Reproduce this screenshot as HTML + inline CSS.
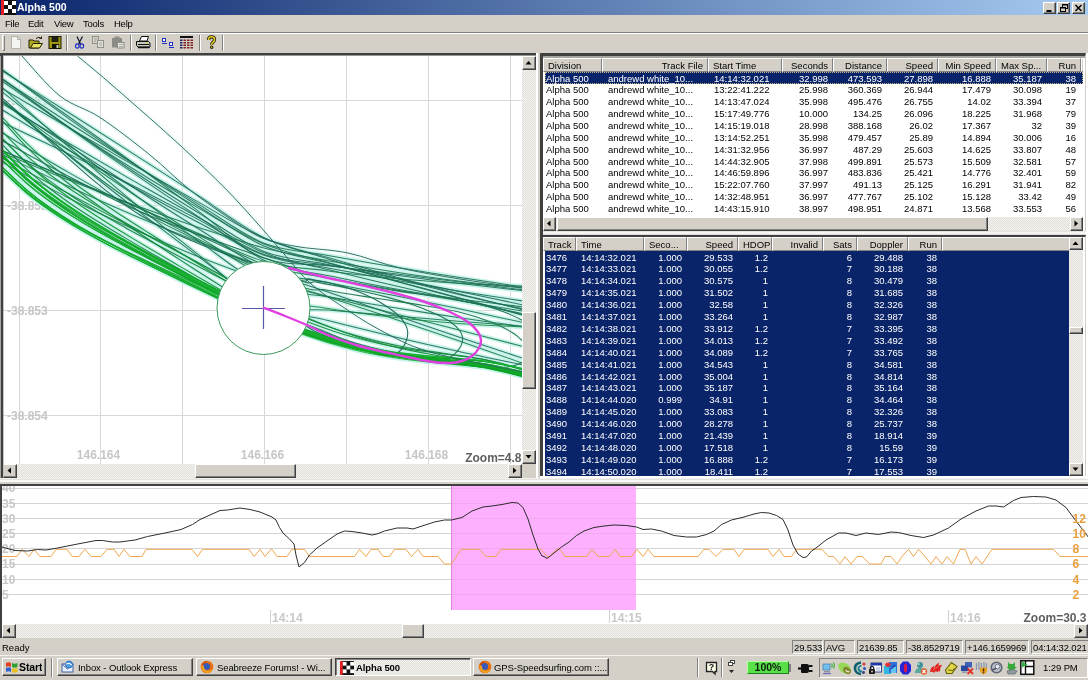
<!DOCTYPE html><html><head><meta charset="utf-8"><title>Alpha 500</title><style>
*{box-sizing:border-box;margin:0;padding:0}
html,body{width:1088px;height:680px;overflow:hidden;background:#d4d0c8;font-family:"Liberation Sans",sans-serif;font-size:10px;color:#000}
.abs{position:absolute}
#title{left:0;top:0;width:1088px;height:15px;background:linear-gradient(90deg,#0a246a 0%,#a6caf0 100%)}
#title .t{left:17px;top:1px;color:#fff;font-weight:bold;font-size:10.5px;line-height:13px;letter-spacing:0px}
.menu{top:16px;height:16px;line-height:16px;font-size:9.5px;letter-spacing:-.25px;color:#000}
.chk{background-color:#ebe9e5;background-image:conic-gradient(#f4f3f0 25%,#e1dfda 0 50%,#f4f3f0 0 75%,#e1dfda 0);background-size:2px 2px}
.btn{background:#d4d0c8;border:1px solid;border-color:#fff #404040 #404040 #fff;box-shadow:inset -1px -1px 0 #808080}
.sunk{border:1px solid;border-color:#808080 #fff #fff #808080}
.hd{position:absolute;top:0;height:14px;background:#d4d0c8;border:1px solid;border-color:#fff #808080 #808080 #fff;font-size:9.5px;line-height:13px;padding:0 4px;white-space:nowrap;overflow:hidden}
.r{text-align:right}
.row{position:absolute;left:0;height:12px;line-height:14px;font-size:9.5px;white-space:nowrap}
.row span{position:absolute;top:0;height:13px;overflow:hidden}
.sel{background:#0a246a;color:#fff}
.lbl{font-weight:bold;font-size:11px;color:#c4c4c4;line-height:11px;white-space:nowrap}
.sb{font-size:9.5px;letter-spacing:-.15px;line-height:13px;white-space:nowrap;overflow:hidden;border:1px solid;border-color:#808080 #fff #fff #808080;padding-left:1px;height:14px;top:640px}
.tb{top:659px;height:18px;font-size:9.5px;letter-spacing:-.1px;line-height:17px;white-space:nowrap;overflow:hidden}
#root{position:absolute;left:0;top:0;width:1088px;height:680px;overflow:hidden;will-change:transform}</style></head><body><div id="root">
<div id="title" class="abs">
<svg class="abs" style="left:1px;top:0" width="15" height="15" viewBox="0 0 15 15"><rect width="15" height="15" fill="#101010"/><rect x="0" y="0" width="3" height="15" fill="#e02020"/><rect x="3" y="1" width="4" height="4" fill="#fff"/><rect x="11" y="1" width="4" height="4" fill="#fff"/><rect x="7" y="5" width="4" height="4" fill="#fff"/><rect x="3" y="9" width="4" height="4" fill="#fff"/><rect x="11" y="9" width="4" height="4" fill="#fff"/></svg>
<div class="abs t">Alpha 500</div>
<div class="abs btn" style="left:1043px;top:2px;width:13px;height:12px"></div>
<div class="abs btn" style="left:1057px;top:2px;width:13px;height:12px"></div>
<div class="abs btn" style="left:1072px;top:2px;width:13px;height:12px"></div>
<svg class="abs" style="left:1043px;top:2px" width="45" height="12" viewBox="0 0 45 12"><rect x="3.500" y="8" width="5" height="2" fill="#000"/><rect x="19.500" y="2.500" width="5" height="4" fill="none" stroke="#000"/><rect x="19" y="2" width="6" height="1.500" fill="#000"/><rect x="17.500" y="5.500" width="5" height="4" fill="#d4d0c8" stroke="#000"/><rect x="17" y="5" width="6" height="1.500" fill="#000"/><path d="M32.500 3 L38.500 9 M38.500 3 L32.500 9" stroke="#000" stroke-width="1.500"/></svg>
</div>
<div class="abs menu" style="left:5px">File</div>
<div class="abs menu" style="left:28px">Edit</div>
<div class="abs menu" style="left:54px">View</div>
<div class="abs menu" style="left:83px">Tools</div>
<div class="abs menu" style="left:114px">Help</div>
<div class="abs" style="left:0;top:32px;width:1088px;height:1px;background:#808080"></div>
<div class="abs" style="left:0;top:33px;width:1088px;height:1px;background:#fff"></div>
<div class="abs" style="left:2px;top:35px;width:3px;height:16px;border:1px solid;border-color:#fff #808080 #808080 #fff"></div>
<div class="abs" style="left:66px;top:35px;width:2px;height:16px;border-left:1px solid #808080;border-right:1px solid #fff"></div>
<div class="abs" style="left:130px;top:35px;width:2px;height:16px;border-left:1px solid #808080;border-right:1px solid #fff"></div>
<div class="abs" style="left:155px;top:35px;width:2px;height:16px;border-left:1px solid #808080;border-right:1px solid #fff"></div>
<div class="abs" style="left:199px;top:35px;width:2px;height:16px;border-left:1px solid #808080;border-right:1px solid #fff"></div>
<div class="abs" style="left:222px;top:35px;width:2px;height:16px;border-left:1px solid #808080;border-right:1px solid #fff"></div>
<svg class="abs" style="left:0;top:34px" width="230" height="19" viewBox="0 34 230 19">
<path d="M11.5 36.5 H17.5 L20.5 39.5 V48.5 H11.5 Z" fill="#f4f4f0" stroke="#b4b2aa" stroke-width="1"/><path d="M17.5 36.5 V39.5 H20.5" fill="none" stroke="#b4b2aa"/>
<path d="M29 40 H33 L34 41 H39 V48 H29 Z" fill="#b0a820" stroke="#202000" stroke-width="1"/><path d="M30.5 48 L33 43.5 H42.5 L39.5 48 Z" fill="#e8e060" stroke="#202000" stroke-width="1"/><path d="M36 38.5 Q39 36 41.5 38.5 M41.5 38.5 V36.5 M41.5 38.5 H39.5" fill="none" stroke="#202000" stroke-width="1"/>
<rect x="49" y="36.5" width="12" height="12" fill="#a09810" stroke="#181800" stroke-width="1"/><rect x="51.5" y="37" width="7" height="5" fill="#202010"/><rect x="52" y="44" width="7" height="4.5" fill="#101000"/><rect x="56.5" y="45" width="2" height="3" fill="#d0d0c0"/>
<path d="M77 36.5 L80.5 44 M82.5 36.5 L78.5 44" stroke="#101020" stroke-width="1.2" fill="none"/><ellipse cx="77.3" cy="46" rx="1.8" ry="2.2" fill="none" stroke="#2030c0" stroke-width="1.2"/><ellipse cx="81.8" cy="46" rx="1.8" ry="2.2" fill="none" stroke="#2030c0" stroke-width="1.2"/>
<rect x="92.5" y="36.5" width="6" height="7" fill="#d4d0c8" stroke="#909088"/><rect x="97.5" y="40.5" width="6" height="7" fill="#e4e2dc" stroke="#909088"/><path d="M94 39 H97 M94 41 H96 M99 43 H102 M99 45 H102" stroke="#a0a098" stroke-width="1"/>
<rect x="112" y="38" width="10" height="9.5" fill="#8c8c86"/><rect x="114.5" y="36.5" width="5" height="2.5" fill="#8c8c86"/><rect x="117.500" y="42.5" width="6.500" height="5.500" fill="#e8e6e0" stroke="#8c8c86"/><path d="M119 44.5 H123 M119 46.5 H123" stroke="#a0a098" stroke-width=".8"/>
<path d="M139.500 41 L141.500 36.500 H148.500 L147 41 Z" fill="#fff" stroke="#101010" stroke-width="1"/><path d="M136.500 41.500 H148.500 L150 43 V47 H138 L136.500 45.500 Z" fill="#c8c8c0" stroke="#101010" stroke-width="1"/><path d="M138 44.500 H149" stroke="#101010" stroke-width="1"/><path d="M138 47.500 H149.500" stroke="#101010" stroke-width="1.5"/><rect x="146" y="42.500" width="2" height="1" fill="#e0e000"/>
<rect x="162.500" y="38.500" width="3" height="3" fill="#fff" stroke="#2030c0"/><path d="M162 43.500 H167" stroke="#2030c0"/><rect x="169.500" y="42.500" width="3" height="3" fill="#fff" stroke="#2030c0"/><path d="M169 47.500 H174" stroke="#2030c0"/>
<rect x="180" y="36" width="13" height="2" fill="#101010"/>
<rect x="180" y="39.5" width="2.500" height="1.500" fill="#202060"/>
<rect x="183.5" y="39.5" width="2.500" height="1.500" fill="#802020"/>
<rect x="187" y="39.5" width="2.500" height="1.500" fill="#802020"/>
<rect x="190.5" y="39.5" width="2.500" height="1.500" fill="#802020"/>
<rect x="180" y="42" width="2.500" height="1.500" fill="#202060"/>
<rect x="183.5" y="42" width="2.500" height="1.500" fill="#802020"/>
<rect x="187" y="42" width="2.500" height="1.500" fill="#802020"/>
<rect x="190.5" y="42" width="2.500" height="1.500" fill="#802020"/>
<rect x="180" y="44.5" width="2.500" height="1.500" fill="#202060"/>
<rect x="183.5" y="44.5" width="2.500" height="1.500" fill="#802020"/>
<rect x="187" y="44.5" width="2.500" height="1.500" fill="#802020"/>
<rect x="190.5" y="44.5" width="2.500" height="1.500" fill="#802020"/>
<rect x="180" y="47" width="2.500" height="1.500" fill="#202060"/>
<rect x="183.5" y="47" width="2.500" height="1.500" fill="#802020"/>
<rect x="187" y="47" width="2.500" height="1.500" fill="#802020"/>
<rect x="190.5" y="47" width="2.500" height="1.500" fill="#802020"/>
<path d="M208.500 40 Q208.500 36.800 211.500 36.800 Q214.500 36.800 214.500 39.600 Q214.500 41.400 212.800 42.400 Q211.700 43.100 211.700 44.800" fill="none" stroke="#201800" stroke-width="3.200"/><path d="M208.500 40 Q208.500 36.800 211.500 36.800 Q214.500 36.800 214.500 39.600 Q214.500 41.400 212.800 42.400 Q211.700 43.100 211.700 44.800" fill="none" stroke="#e0d020" stroke-width="1.600"/><circle cx="211.700" cy="47.300" r="1.700" fill="#201800"/><circle cx="211.700" cy="47.300" r=".8" fill="#e0d020"/>
</svg>
<div class="abs" style="left:0;top:53px;width:536px;height:425px;background:#fff;border-top:3px solid #404040;border-left:3px solid #404040"></div><div class="abs" style="left:0;top:56px;width:1px;height:422px;background:#a8a49e"></div><div class="abs" style="left:536px;top:53px;width:2px;height:426px;background:#fff"></div><div class="abs" style="left:0;top:478px;width:1088px;height:4px;background:linear-gradient(#f2f1ee 0 1px,#e4e2dd 1px 2px,#f8f8f6 2px 4px)"></div>
<svg class="abs" style="left:3px;top:56px" width="519" height="408" viewBox="3 56 519 408">
<path d="M19.5 56V464M100.5 56V464M182.5 56V464M264.5 56V464M346.5 56V464M428.5 56V464M510.5 56V464M3 100.5H522M3 205.5H522M3 310.5H522M3 415.5H522" stroke="#d8d8d8" stroke-width="1" fill="none"/>
<text x="7" y="104.8" font-family="Liberation Sans,sans-serif" font-weight="bold" font-size="12" fill="#c6c6c6">-38.851</text>
<text x="7" y="209.8" font-family="Liberation Sans,sans-serif" font-weight="bold" font-size="12" fill="#c6c6c6">-38.852</text>
<text x="7" y="314.8" font-family="Liberation Sans,sans-serif" font-weight="bold" font-size="12" fill="#c6c6c6">-38.853</text>
<text x="7" y="419.8" font-family="Liberation Sans,sans-serif" font-weight="bold" font-size="12" fill="#c6c6c6">-38.854</text>
<text x="98.5" y="459" text-anchor="middle" font-family="Liberation Sans,sans-serif" font-weight="bold" font-size="12" fill="#c6c6c6">146.164</text>
<text x="262.5" y="459" text-anchor="middle" font-family="Liberation Sans,sans-serif" font-weight="bold" font-size="12" fill="#c6c6c6">146.166</text>
<text x="426.5" y="459" text-anchor="middle" font-family="Liberation Sans,sans-serif" font-weight="bold" font-size="12" fill="#c6c6c6">146.168</text>
<path d="M3.0 104.1C13.8 110.5 46.3 130.1 68.0 142.8C89.7 155.6 111.3 168.2 133.0 180.6C154.7 192.9 176.2 205.2 198.0 217.2C219.8 229.2 242.3 244.1 264.0 252.8C285.7 261.5 306.5 264.1 328.0 269.6C349.5 275.0 371.3 280.2 393.0 285.3C414.7 290.4 436.3 295.3 458.0 300.0C479.7 304.8 512.2 311.4 523.0 313.7" stroke="#c4f2ea" stroke-width="4.5" fill="none" opacity="0.9"/>
<path d="M3.0 79.2C13.8 87.1 46.3 111.2 68.0 126.5C89.7 141.8 111.3 156.6 133.0 171.0C154.7 185.3 176.2 199.2 198.0 212.6C219.8 226.0 242.3 242.7 264.0 251.4C285.7 260.0 306.5 260.0 328.0 264.4C349.5 268.8 371.3 273.2 393.0 277.7C414.7 282.2 436.3 286.7 458.0 291.2C479.7 295.7 512.2 302.6 523.0 304.9" stroke="#c4f2ea" stroke-width="4.5" fill="none" opacity="0.9"/>
<path d="M3.0 70.4C13.8 78.0 46.3 100.6 68.0 116.0C89.7 131.4 111.3 147.0 133.0 162.8C154.7 178.6 176.2 194.7 198.0 210.9C219.8 227.2 242.3 249.5 264.0 260.3C285.7 271.1 306.5 270.9 328.0 275.6C349.5 280.3 371.3 284.6 393.0 288.4C414.7 292.3 436.3 295.8 458.0 298.8C479.7 301.9 512.2 305.5 523.0 306.8" stroke="#c4f2ea" stroke-width="4.5" fill="none" opacity="0.9"/>
<path d="M3.0 122.8C13.8 127.9 46.3 143.1 68.0 153.6C89.7 164.1 111.3 174.8 133.0 185.8C154.7 196.8 176.2 208.0 198.0 219.4C219.8 230.9 242.3 246.8 264.0 254.5C285.7 262.1 306.5 261.8 328.0 265.2C349.5 268.5 371.3 271.7 393.0 274.8C414.7 277.8 436.3 280.6 458.0 283.3C479.7 285.9 512.2 289.5 523.0 290.7" stroke="#c4f2ea" stroke-width="4.5" fill="none" opacity="0.9"/>
<path d="M3.0 79.7C13.8 86.8 46.3 108.2 68.0 122.2C89.7 136.1 111.3 149.9 133.0 163.6C154.7 177.2 176.2 190.7 198.0 203.9C219.8 217.2 242.3 234.7 264.0 243.3C285.7 251.8 306.5 251.5 328.0 255.4C349.5 259.3 371.3 263.1 393.0 266.7C414.7 270.4 436.3 273.9 458.0 277.2C479.7 280.6 512.2 285.3 523.0 286.9" stroke="#c4f2ea" stroke-width="4.5" fill="none" opacity="0.9"/>
<path d="M3.0 110.3C13.8 116.9 46.3 136.9 68.0 149.7C89.7 162.5 111.3 175.0 133.0 187.0C154.7 199.1 176.2 210.8 198.0 222.2C219.8 233.6 242.3 247.6 264.0 255.2C285.7 262.8 306.5 263.9 328.0 268.0C349.5 272.1 371.3 276.0 393.0 279.8C414.7 283.7 436.3 287.3 458.0 290.9C479.7 294.4 512.2 299.3 523.0 301.0" stroke="#c4f2ea" stroke-width="4.5" fill="none" opacity="0.9"/>
<path d="M3.0 154.8C13.8 160.0 46.3 176.1 68.0 186.1C89.7 196.2 111.3 205.9 133.0 215.1C154.7 224.4 176.2 233.2 198.0 241.7C219.8 250.1 242.3 259.8 264.0 265.9C285.7 271.9 306.5 273.9 328.0 277.9C349.5 281.8 371.3 285.7 393.0 289.4C414.7 293.2 436.3 296.9 458.0 300.5C479.7 304.2 512.2 309.4 523.0 311.2" stroke="#c4f2ea" stroke-width="4.5" fill="none" opacity="0.9"/>
<path d="M3.0 88.9C13.8 95.3 46.3 114.6 68.0 127.2C89.7 139.9 111.3 152.5 133.0 164.9C154.7 177.3 176.2 189.7 198.0 201.9C219.8 214.1 242.3 228.6 264.0 238.1C285.7 247.6 306.5 252.3 328.0 258.9C349.5 265.5 371.3 271.7 393.0 277.6C414.7 283.5 436.3 289.1 458.0 294.3C479.7 299.6 512.2 306.5 523.0 309.0" stroke="#c4f2ea" stroke-width="4.5" fill="none" opacity="0.9"/>
<path d="M3.0 151.1C13.8 155.6 46.3 169.1 68.0 178.2C89.7 187.2 111.3 196.4 133.0 205.6C154.7 214.8 176.2 224.0 198.0 233.3C219.8 242.6 242.3 255.2 264.0 261.4C285.7 267.7 306.5 268.1 328.0 270.9C349.5 273.7 371.3 276.1 393.0 278.2C414.7 280.2 436.3 281.9 458.0 283.2C479.7 284.5 512.2 285.5 523.0 286.0" stroke="#c4f2ea" stroke-width="4.5" fill="none" opacity="0.9"/>
<path d="M3.0 153.2C13.8 157.6 46.3 171.3 68.0 179.8C89.7 188.4 111.3 196.6 133.0 204.5C154.7 212.4 176.2 219.9 198.0 227.2C219.8 234.4 242.3 242.3 264.0 247.9C285.7 253.5 306.5 256.8 328.0 260.7C349.5 264.7 371.3 268.4 393.0 271.7C414.7 275.1 436.3 278.1 458.0 280.9C479.7 283.6 512.2 287.0 523.0 288.2" stroke="#c4f2ea" stroke-width="4.5" fill="none" opacity="0.9"/>
<path d="M3.0 70.1C13.8 78.1 46.3 102.5 68.0 118.1C89.7 133.6 111.3 148.7 133.0 163.4C154.7 178.0 176.2 192.2 198.0 206.0C219.8 219.8 242.3 236.5 264.0 246.0C285.7 255.5 306.5 257.3 328.0 263.0C349.5 268.7 371.3 274.4 393.0 280.2C414.7 285.9 436.3 291.7 458.0 297.5C479.7 303.3 512.2 312.0 523.0 314.9" stroke="#c4f2ea" stroke-width="4.5" fill="none" opacity="0.9"/>
<path d="M3.0 71.4C13.8 78.2 46.3 98.5 68.0 112.2C89.7 125.9 111.3 139.7 133.0 153.6C154.7 167.4 176.2 181.4 198.0 195.4C219.8 209.5 242.3 227.4 264.0 237.8C285.7 248.2 306.5 251.2 328.0 257.6C349.5 264.0 371.3 270.2 393.0 276.2C414.7 282.2 436.3 288.0 458.0 293.6C479.7 299.3 512.2 307.2 523.0 309.9" stroke="#c4f2ea" stroke-width="4.5" fill="none" opacity="0.9"/>
<path d="M3.0 79.7C13.8 87.7 46.3 111.8 68.0 127.4C89.7 142.9 111.3 158.1 133.0 172.9C154.7 187.8 176.2 202.3 198.0 216.5C219.8 230.6 242.3 249.7 264.0 258.0C285.7 266.2 306.5 263.1 328.0 265.7C349.5 268.3 371.3 271.0 393.0 273.6C414.7 276.3 436.3 279.0 458.0 281.7C479.7 284.4 512.2 288.6 523.0 289.9" stroke="#c4f2ea" stroke-width="4.5" fill="none" opacity="0.9"/>
<path d="M3.0 81.8C13.8 89.3 46.3 112.3 68.0 126.7C89.7 141.2 111.3 155.3 133.0 168.8C154.7 182.3 176.2 195.3 198.0 207.9C219.8 220.4 242.3 235.0 264.0 244.1C285.7 253.2 306.5 256.4 328.0 262.5C349.5 268.5 371.3 274.5 393.0 280.4C414.7 286.4 436.3 292.2 458.0 298.0C479.7 303.8 512.2 312.3 523.0 315.1" stroke="#c4f2ea" stroke-width="4.5" fill="none" opacity="0.9"/>
<path d="M3.0 102.1C13.8 109.9 46.3 134.0 68.0 149.3C89.7 164.6 111.3 179.5 133.0 194.0C154.7 208.4 176.2 222.5 198.0 236.1C219.8 249.7 242.3 265.6 264.0 275.7C285.7 285.8 306.5 289.7 328.0 296.9C349.5 304.0 371.3 311.2 393.0 318.5C414.7 325.8 436.3 333.2 458.0 340.6C479.7 348.1 512.2 359.5 523.0 363.3" stroke="#c4f2ea" stroke-width="4.5" fill="none" opacity="0.9"/>
<path d="M3.0 102.3C13.8 109.4 46.3 131.0 68.0 145.1C89.7 159.3 111.3 173.3 133.0 187.2C154.7 201.1 176.2 214.9 198.0 228.5C219.8 242.1 242.3 258.3 264.0 268.9C285.7 279.5 306.5 284.4 328.0 292.0C349.5 299.6 371.3 307.1 393.0 314.6C414.7 322.1 436.3 329.4 458.0 336.7C479.7 344.0 512.2 354.8 523.0 358.4" stroke="#c4f2ea" stroke-width="4.5" fill="none" opacity="0.9"/>
<path d="M3.0 92.3C13.8 100.9 46.3 127.1 68.0 144.0C89.7 160.8 111.3 177.3 133.0 193.3C154.7 209.4 176.2 225.1 198.0 240.4C219.8 255.7 242.3 275.7 264.0 285.1C285.7 294.5 306.5 293.0 328.0 296.8C349.5 300.5 371.3 304.1 393.0 307.6C414.7 311.0 436.3 314.3 458.0 317.5C479.7 320.7 512.2 325.1 523.0 326.6" stroke="#c4f2ea" stroke-width="4.5" fill="none" opacity="0.9"/>
<path d="M3.0 162.7C13.8 168.5 46.3 186.7 68.0 197.7C89.7 208.8 111.3 219.2 133.0 229.0C154.7 238.8 176.2 247.9 198.0 256.5C219.8 265.0 242.3 273.5 264.0 280.2C285.7 286.9 306.5 291.1 328.0 296.6C349.5 302.1 371.3 307.6 393.0 313.2C414.7 318.7 436.3 324.2 458.0 329.8C479.7 335.3 512.2 343.7 523.0 346.5" stroke="#c4f2ea" stroke-width="4.5" fill="none" opacity="0.9"/>
<path d="M3.0 158.6C13.8 164.4 46.3 181.7 68.0 193.2C89.7 204.8 111.3 216.3 133.0 227.8C154.7 239.3 176.2 250.9 198.0 262.4C219.8 273.9 242.3 289.2 264.0 296.9C285.7 304.6 306.5 305.1 328.0 308.5C349.5 311.9 371.3 314.8 393.0 317.3C414.7 319.8 436.3 321.9 458.0 323.5C479.7 325.1 512.2 326.4 523.0 327.0" stroke="#c4f2ea" stroke-width="4.5" fill="none" opacity="0.9"/>
<path d="M3.0 100.9C13.8 109.9 46.3 137.4 68.0 155.0C89.7 172.7 111.3 190.0 133.0 206.9C154.7 223.7 176.2 240.2 198.0 256.3C219.8 272.4 242.3 292.8 264.0 303.5C285.7 314.2 306.5 315.0 328.0 320.5C349.5 326.0 371.3 331.3 393.0 336.4C414.7 341.6 436.3 346.5 458.0 351.2C479.7 356.0 512.2 362.6 523.0 364.9" stroke="#c4f2ea" stroke-width="4.5" fill="none" opacity="0.9"/>
<path d="M3.0 88.1C13.8 97.9 46.3 127.5 68.0 146.4C89.7 165.4 111.3 183.9 133.0 201.9C154.7 219.9 176.2 237.4 198.0 254.4C219.8 271.5 242.3 294.9 264.0 304.1C285.7 313.4 306.5 308.2 328.0 310.1C349.5 312.0 371.3 313.9 393.0 315.8C414.7 317.6 436.3 319.4 458.0 321.2C479.7 322.9 512.2 325.5 523.0 326.3" stroke="#c4f2ea" stroke-width="4.5" fill="none" opacity="0.9"/>
<path d="M3.0 133.3C13.8 139.8 46.3 159.7 68.0 172.1C89.7 184.5 111.3 196.5 133.0 207.9C154.7 219.4 176.2 230.3 198.0 240.8C219.8 251.2 242.3 263.7 264.0 270.7C285.7 277.7 306.5 278.5 328.0 282.7C349.5 286.8 371.3 291.0 393.0 295.3C414.7 299.6 436.3 304.0 458.0 308.6C479.7 313.1 512.2 320.2 523.0 322.5" stroke="#c4f2ea" stroke-width="4.5" fill="none" opacity="0.9"/>
<path d="M3.0 139.5C6.8 143.3 18.2 154.9 26.0 161.9C33.8 168.8 41.8 175.1 50.0 181.1C58.2 187.2 66.7 192.8 75.0 198.2C83.3 203.5 91.7 208.4 100.0 213.3C108.3 218.2 116.7 222.8 125.0 227.4C133.3 232.0 140.5 235.8 150.0 240.9C159.5 246.0 171.2 252.2 182.0 257.9C192.8 263.6 205.3 270.2 215.0 275.2C224.7 280.2 231.8 283.8 240.0 287.9C248.2 292.0 256.2 295.9 264.0 299.6C271.8 303.3 279.3 306.8 287.0 310.1C294.7 313.5 302.3 316.7 310.0 319.7C317.7 322.7 325.3 325.6 333.0 328.2C340.7 330.9 348.2 333.3 356.0 335.6C363.8 337.8 372.2 340.0 380.0 341.9C387.8 343.7 395.3 345.3 403.0 346.7C410.7 348.2 418.2 349.4 426.0 350.7C433.8 351.9 440.0 352.6 450.0 354.2C460.0 355.7 473.8 357.3 486.0 360.0C498.2 362.6 516.8 368.4 523.0 370.0" stroke="#c4f2ea" stroke-width="4.5" fill="none" opacity="0.95"/>
<path d="M3.0 121.3C6.8 125.5 18.2 138.5 26.0 146.4C33.8 154.2 41.8 161.4 50.0 168.5C58.2 175.5 66.7 182.1 75.0 188.5C83.3 194.9 91.7 200.8 100.0 206.6C108.3 212.5 116.7 218.1 125.0 223.7C133.3 229.3 140.5 234.0 150.0 240.2C159.5 246.5 171.2 254.1 182.0 261.1C192.8 268.1 205.3 276.1 215.0 282.3C224.7 288.4 231.8 292.9 240.0 298.0C248.2 303.0 256.2 308.5 264.0 312.6C271.8 316.7 279.3 319.3 287.0 322.5C294.7 325.6 302.3 328.6 310.0 331.4C317.7 334.3 325.3 336.9 333.0 339.3C340.7 341.8 348.2 344.0 356.0 346.0C363.8 348.1 372.2 350.1 380.0 351.7C387.8 353.4 395.3 354.7 403.0 355.9C410.7 357.2 418.2 358.2 426.0 359.2C433.8 360.3 440.0 360.8 450.0 362.1C460.0 363.4 473.8 364.6 486.0 367.0C498.2 369.3 516.8 374.5 523.0 376.0" stroke="#c4f2ea" stroke-width="4.5" fill="none" opacity="0.95"/>
<path d="M3.0 145.3C6.8 149.2 18.2 161.3 26.0 168.6C33.8 175.8 41.8 182.3 50.0 188.7C58.2 195.1 66.7 201.0 75.0 206.7C83.3 212.4 91.7 217.6 100.0 222.8C108.3 228.0 116.7 232.9 125.0 237.9C133.3 242.8 140.5 246.9 150.0 252.4C159.5 257.8 171.2 264.5 182.0 270.6C192.8 276.7 205.3 283.7 215.0 289.1C224.7 294.5 231.8 298.4 240.0 302.8C248.2 307.2 256.2 311.8 264.0 315.5C271.8 319.1 279.3 321.9 287.0 324.9C294.7 327.9 302.3 330.8 310.0 333.5C317.7 336.2 325.3 338.7 333.0 341.0C340.7 343.3 348.2 345.4 356.0 347.3C363.8 349.3 372.2 351.1 380.0 352.6C387.8 354.1 395.3 355.3 403.0 356.4C410.7 357.5 418.2 358.4 426.0 359.3C433.8 360.2 440.0 360.7 450.0 361.8C460.0 362.9 473.8 363.9 486.0 366.0C498.2 368.1 516.8 373.0 523.0 374.4" stroke="#c4f2ea" stroke-width="4.5" fill="none" opacity="0.95"/>
<path d="M3.0 138.9C6.8 142.8 18.2 155.2 26.0 162.5C33.8 169.9 41.8 176.6 50.0 183.2C58.2 189.7 66.7 195.8 75.0 201.7C83.3 207.5 91.7 212.9 100.0 218.2C108.3 223.6 116.7 228.7 125.0 233.8C133.3 238.8 140.5 243.1 150.0 248.7C159.5 254.4 171.2 261.3 182.0 267.6C192.8 273.9 205.3 281.2 215.0 286.8C224.7 292.3 231.8 296.4 240.0 300.9C248.2 305.5 256.2 310.3 264.0 314.0C271.8 317.8 279.3 320.5 287.0 323.5C294.7 326.5 302.3 329.3 310.0 332.0C317.7 334.7 325.3 337.2 333.0 339.5C340.7 341.8 348.2 343.8 356.0 345.8C363.8 347.7 372.2 349.5 380.0 351.0C387.8 352.5 395.3 353.7 403.0 354.8C410.7 355.9 418.2 356.7 426.0 357.6C433.8 358.5 440.0 359.0 450.0 360.1C460.0 361.2 473.8 362.1 486.0 364.2C498.2 366.3 516.8 371.2 523.0 372.6" stroke="#c4f2ea" stroke-width="4.5" fill="none" opacity="0.95"/>
<path d="M3.0 118.0C6.8 122.1 18.2 134.9 26.0 142.6C33.8 150.3 41.8 157.4 50.0 164.2C58.2 171.0 66.7 177.5 75.0 183.7C83.3 189.9 91.7 195.6 100.0 201.3C108.3 206.9 116.7 212.3 125.0 217.8C133.3 223.2 140.5 227.7 150.0 233.7C159.5 239.7 171.2 247.1 182.0 253.8C192.8 260.6 205.3 268.4 215.0 274.3C224.7 280.2 231.8 284.6 240.0 289.5C248.2 294.3 256.2 299.5 264.0 303.5C271.8 307.5 279.3 310.4 287.0 313.6C294.7 316.8 302.3 319.9 310.0 322.8C317.7 325.7 325.3 328.4 333.0 330.9C340.7 333.4 348.2 335.7 356.0 337.8C363.8 339.9 372.2 342.0 380.0 343.7C387.8 345.4 395.3 346.8 403.0 348.1C410.7 349.5 418.2 350.5 426.0 351.6C433.8 352.7 440.0 353.4 450.0 354.7C460.0 356.1 473.8 357.5 486.0 359.9C498.2 362.3 516.8 367.7 523.0 369.3" stroke="#c4f2ea" stroke-width="4.5" fill="none" opacity="0.95"/>
<path d="M3.0 160.9C6.8 164.5 18.2 176.0 26.0 182.8C33.8 189.6 41.8 195.7 50.0 201.6C58.2 207.5 66.7 212.9 75.0 218.1C83.3 223.3 91.7 228.1 100.0 232.8C108.3 237.5 116.7 241.9 125.0 246.4C133.3 250.8 140.5 254.5 150.0 259.4C159.5 264.4 171.2 270.3 182.0 275.8C192.8 281.3 205.3 287.6 215.0 292.5C224.7 297.3 231.8 300.8 240.0 304.7C248.2 308.6 256.2 312.5 264.0 316.0C271.8 319.4 279.3 322.5 287.0 325.5C294.7 328.6 302.3 331.5 310.0 334.2C317.7 336.9 325.3 339.5 333.0 341.8C340.7 344.2 348.2 346.3 356.0 348.2C363.8 350.2 372.2 352.0 380.0 353.6C387.8 355.1 395.3 356.3 403.0 357.5C410.7 358.7 418.2 359.6 426.0 360.5C433.8 361.4 440.0 361.9 450.0 363.1C460.0 364.2 473.8 365.3 486.0 367.4C498.2 369.6 516.8 374.6 523.0 376.0" stroke="#c4f2ea" stroke-width="4.5" fill="none" opacity="0.95"/>
<path d="M3.0 132.3C6.8 136.1 18.2 148.0 26.0 155.1C33.8 162.2 41.8 168.6 50.0 174.8C58.2 181.0 66.7 186.8 75.0 192.3C83.3 197.8 91.7 202.9 100.0 207.9C108.3 213.0 116.7 217.7 125.0 222.5C133.3 227.2 140.5 231.2 150.0 236.5C159.5 241.8 171.2 248.2 182.0 254.1C192.8 260.0 205.3 266.8 215.0 272.0C224.7 277.2 231.8 281.0 240.0 285.2C248.2 289.5 256.2 293.5 264.0 297.4C271.8 301.3 279.3 305.0 287.0 308.6C294.7 312.2 302.3 315.7 310.0 319.0C317.7 322.2 325.3 325.3 333.0 328.2C340.7 331.1 348.2 333.7 356.0 336.2C363.8 338.8 372.2 341.2 380.0 343.3C387.8 345.4 395.3 347.2 403.0 348.9C410.7 350.6 418.2 352.0 426.0 353.5C433.8 355.0 440.0 355.9 450.0 357.8C460.0 359.7 473.8 361.7 486.0 364.8C498.2 367.8 516.8 374.1 523.0 376.0" stroke="#c4f2ea" stroke-width="4.5" fill="none" opacity="0.95"/>
<path d="M3.0 98.7C25.8 118.1 92.3 185.4 140.0 215.0C187.7 244.5 261.0 265.3 289.0 275.9C317.0 286.6 301.3 277.8 308.2 278.9C315.1 280.1 322.8 281.2 330.4 283.0C338.0 284.8 346.8 287.4 353.9 289.9C361.0 292.5 367.3 295.3 373.1 298.2C378.8 301.2 384.1 304.6 388.5 307.7C393.0 310.7 396.8 313.7 399.7 316.6C402.5 319.6 404.5 322.7 405.8 325.3C407.2 327.9 407.6 329.7 407.7 332.2C407.8 334.7 407.4 337.6 406.5 340.3C405.5 343.0 403.9 346.3 402.1 348.6C400.4 350.8 398.2 352.5 396.0 353.7C393.7 354.9 391.8 355.7 388.5 355.7C385.2 355.7 381.0 355.2 376.2 353.9C371.3 352.6 364.6 349.8 359.5 348.0C354.3 346.2 350.1 344.8 345.3 343.2C340.4 341.5 335.6 340.1 330.4 338.1C325.3 336.0 319.2 333.5 314.3 331.0C309.5 328.5 306.0 325.7 301.4 323.3C296.7 320.9 291.2 318.5 286.5 316.6C281.9 314.7 275.7 312.7 273.5 312.0" stroke="#c4f2ea" stroke-width="4.5" fill="none" opacity=".22"/>
<path d="M3.0 151.0C25.8 160.6 92.3 187.6 140.0 208.4C187.7 229.3 259.5 263.8 289.0 276.1C318.5 288.4 306.9 280.1 317.0 282.1C327.1 284.2 338.5 286.1 349.6 288.5C360.8 290.9 373.6 293.7 384.0 296.4C394.4 299.1 403.6 301.7 412.0 304.6C420.5 307.4 428.2 310.6 434.6 313.6C441.1 316.5 446.7 319.4 450.9 322.3C455.1 325.2 458.0 328.4 460.0 331.0C461.9 333.6 462.5 335.4 462.7 337.9C462.8 340.4 462.2 343.3 460.9 346.0C459.5 348.7 457.1 352.0 454.5 354.2C452.0 356.4 448.8 358.2 445.5 359.4C442.2 360.6 439.5 361.4 434.6 361.5C429.8 361.6 423.6 361.2 416.5 360.0C409.5 358.8 399.7 356.2 392.1 354.4C384.6 352.6 378.4 351.1 371.3 349.3C364.2 347.5 357.1 345.8 349.6 343.4C342.1 341.0 333.2 337.8 326.1 334.8C319.0 331.8 313.9 328.4 307.1 325.3C300.3 322.2 292.2 318.9 285.4 316.1C278.6 313.4 269.6 310.2 266.4 309.0" stroke="#c4f2ea" stroke-width="4.5" fill="none" opacity=".22"/>
<path d="M3.0 101.7C25.8 119.2 92.3 177.2 140.0 207.1C187.7 237.1 257.7 267.6 289.0 281.5C320.3 295.3 313.8 287.5 327.7 290.2C341.7 292.9 357.3 295.3 372.7 297.8C388.1 300.2 405.8 302.5 420.2 304.9C434.5 307.2 447.2 309.2 458.9 312.0C470.6 314.8 481.2 318.2 490.1 321.7C499.1 325.1 506.8 329.1 512.6 332.8C518.5 336.5 522.4 340.7 525.1 343.7C527.8 346.7 528.7 348.5 528.9 350.9C529.1 353.4 528.2 356.1 526.4 358.3C524.5 360.5 521.2 362.9 517.6 364.4C514.1 365.9 509.7 366.7 505.1 367.3C500.6 367.8 496.8 368.0 490.1 367.6C483.5 367.2 474.9 366.3 465.2 364.9C455.4 363.5 441.8 361.0 431.4 359.3C421.0 357.6 412.5 356.4 402.7 354.7C392.9 352.9 383.1 351.3 372.7 348.7C362.3 346.1 350.0 342.5 340.2 339.0C330.4 335.5 323.4 331.6 314.0 327.7C304.6 323.8 293.4 319.3 284.0 315.6C274.6 311.9 262.1 307.1 257.8 305.3" stroke="#c4f2ea" stroke-width="4.5" fill="none" opacity=".22"/>
<path d="M3.0 141.1C25.8 152.9 92.3 190.7 140.0 211.6C187.7 232.5 256.2 255.1 289.0 266.5C321.8 277.9 319.5 275.9 336.7 279.8C353.8 283.7 373.0 286.9 392.0 290.1C410.9 293.2 432.7 295.3 450.4 298.5C468.1 301.8 483.7 304.7 498.0 309.7C512.4 314.7 525.5 321.5 536.5 328.7C547.5 336.0 557.0 345.3 564.1 353.1C571.3 360.8 576.2 369.5 579.5 375.2C582.8 381.0 583.9 384.8 584.1 387.7C584.4 390.6 583.4 392.1 581.1 392.8C578.7 393.5 574.6 392.8 570.3 391.8C565.9 390.8 560.6 388.7 554.9 386.8C549.3 384.9 544.7 382.9 536.5 380.3C528.3 377.7 517.8 373.9 505.7 371.0C493.7 368.0 477.0 364.7 464.2 362.5C451.4 360.3 440.9 359.5 428.9 357.8C416.8 356.1 404.8 354.8 392.0 352.2C379.2 349.6 364.1 345.9 352.0 342.1C340.0 338.3 331.3 334.1 319.7 329.6C308.2 325.1 294.4 319.7 282.9 315.2C271.3 310.6 256.0 304.4 250.6 302.2" stroke="#c4f2ea" stroke-width="4.5" fill="none" opacity=".22"/>
<path d="M3.0 157.4C6.8 161.1 18.2 172.8 26.0 179.7C33.8 186.6 41.8 192.8 50.0 198.8C58.2 204.9 66.7 210.5 75.0 215.8C83.3 221.1 91.7 226.0 100.0 230.9C108.3 235.7 116.7 240.3 125.0 244.8C133.3 249.4 140.5 253.2 150.0 258.3C159.5 263.4 171.2 269.5 182.0 275.2C192.8 280.9 205.3 287.4 215.0 292.3C224.7 297.3 231.8 300.9 240.0 305.0C248.2 309.0 256.2 313.1 264.0 316.6C271.8 320.1 279.3 322.9 287.0 325.8C294.7 328.7 302.3 331.4 310.0 334.0C317.7 336.6 325.3 339.0 333.0 341.2C340.7 343.4 348.2 345.4 356.0 347.2C363.8 349.0 372.2 350.7 380.0 352.1C387.8 353.5 395.3 354.6 403.0 355.6C410.7 356.6 418.2 357.4 426.0 358.2C433.8 359.0 440.0 359.4 450.0 360.3C460.0 361.3 473.8 362.1 486.0 364.0C498.2 366.0 516.8 370.6 523.0 371.9" stroke="#c4f2ea" stroke-width="4.5" fill="none" opacity="0.95"/>
<path d="M3.0 171.2C6.8 174.8 18.2 185.9 26.0 192.5C33.8 199.1 41.8 204.9 50.0 210.6C58.2 216.3 66.7 221.5 75.0 226.5C83.3 231.4 91.7 235.9 100.0 240.4C108.3 244.9 116.7 249.1 125.0 253.3C133.3 257.5 140.5 261.0 150.0 265.6C159.5 270.3 171.2 275.9 182.0 281.1C192.8 286.3 205.3 292.3 215.0 296.8C224.7 301.4 231.8 304.7 240.0 308.4C248.2 312.0 256.2 315.6 264.0 318.9C271.8 322.3 279.3 325.3 287.0 328.3C294.7 331.2 302.3 334.1 310.0 336.7C317.7 339.3 325.3 341.8 333.0 344.0C340.7 346.3 348.2 348.3 356.0 350.2C363.8 352.1 372.2 353.8 380.0 355.3C387.8 356.7 395.3 357.9 403.0 359.0C410.7 360.0 418.2 360.9 426.0 361.7C433.8 362.5 440.0 363.0 450.0 364.0C460.0 365.1 473.8 366.0 486.0 368.0C498.2 370.0 516.8 374.8 523.0 376.1" stroke="#c4f2ea" stroke-width="4.5" fill="none" opacity="0.95"/>
<path d="M3.0 151.1C6.8 154.8 18.2 166.6 26.0 173.6C33.8 180.6 41.8 187.0 50.0 193.1C58.2 199.3 66.7 205.0 75.0 210.4C83.3 215.9 91.7 220.9 100.0 225.8C108.3 230.8 116.7 235.5 125.0 240.2C133.3 244.8 140.5 248.8 150.0 254.0C159.5 259.1 171.2 265.5 182.0 271.3C192.8 277.1 205.3 283.8 215.0 288.9C224.7 294.0 231.8 297.7 240.0 301.9C248.2 306.0 256.2 310.2 264.0 313.8C271.8 317.4 279.3 320.4 287.0 323.4C294.7 326.4 302.3 329.3 310.0 332.1C317.7 334.8 325.3 337.3 333.0 339.6C340.7 342.0 348.2 344.1 356.0 346.0C363.8 348.0 372.2 349.8 380.0 351.4C387.8 352.9 395.3 354.1 403.0 355.3C410.7 356.4 418.2 357.3 426.0 358.3C433.8 359.2 440.0 359.7 450.0 360.8C460.0 362.0 473.8 363.0 486.0 365.1C498.2 367.3 516.8 372.3 523.0 373.7" stroke="#c4f2ea" stroke-width="4.5" fill="none" opacity="0.95"/>
<path d="M3.0 155.7C6.8 159.4 18.2 171.1 26.0 178.1C33.8 185.0 41.8 191.3 50.0 197.3C58.2 203.4 66.7 209.0 75.0 214.4C83.3 219.8 91.7 224.7 100.0 229.5C108.3 234.4 116.7 239.0 125.0 243.6C133.3 248.2 140.5 252.1 150.0 257.2C159.5 262.3 171.2 268.5 182.0 274.2C192.8 279.9 205.3 286.5 215.0 291.5C224.7 296.5 231.8 300.2 240.0 304.3C248.2 308.3 256.2 312.5 264.0 316.0C271.8 319.5 279.3 322.4 287.0 325.3C294.7 328.3 302.3 331.1 310.0 333.7C317.7 336.3 325.3 338.8 333.0 341.1C340.7 343.3 348.2 345.3 356.0 347.2C363.8 349.1 372.2 350.8 380.0 352.3C387.8 353.7 395.3 354.9 403.0 355.9C410.7 357.0 418.2 357.8 426.0 358.7C433.8 359.5 440.0 359.9 450.0 360.9C460.0 362.0 473.8 362.9 486.0 364.9C498.2 366.9 516.8 371.7 523.0 373.0" stroke="#c4f2ea" stroke-width="4.5" fill="none" opacity="0.95"/>
<path d="M3.0 171.0C6.8 174.4 18.2 185.4 26.0 191.8C33.8 198.2 41.8 203.9 50.0 209.4C58.2 214.9 66.7 220.0 75.0 224.8C83.3 229.6 91.7 234.0 100.0 238.3C108.3 242.6 116.7 246.6 125.0 250.7C133.3 254.7 140.5 258.1 150.0 262.5C159.5 267.0 171.2 272.4 182.0 277.4C192.8 282.4 205.3 288.1 215.0 292.5C224.7 296.8 231.8 300.0 240.0 303.5C248.2 307.1 256.2 310.3 264.0 313.7C271.8 317.0 279.3 320.4 287.0 323.5C294.7 326.7 302.3 329.7 310.0 332.5C317.7 335.3 325.3 337.9 333.0 340.4C340.7 342.8 348.2 345.0 356.0 347.1C363.8 349.1 372.2 351.1 380.0 352.7C387.8 354.4 395.3 355.7 403.0 356.9C410.7 358.2 418.2 359.2 426.0 360.2C433.8 361.2 440.0 361.8 450.0 363.1C460.0 364.4 473.8 365.6 486.0 367.9C498.2 370.2 516.8 375.4 523.0 376.9" stroke="#c4f2ea" stroke-width="4.5" fill="none" opacity="0.95"/>
<path d="M3.0 170.9C6.8 174.4 18.2 185.6 26.0 192.2C33.8 198.8 41.8 204.7 50.0 210.4C58.2 216.1 66.7 221.3 75.0 226.3C83.3 231.3 91.7 235.9 100.0 240.4C108.3 244.9 116.7 249.1 125.0 253.3C133.3 257.6 140.5 261.1 150.0 265.8C159.5 270.5 171.2 276.1 182.0 281.4C192.8 286.6 205.3 292.6 215.0 297.2C224.7 301.8 231.8 305.1 240.0 308.8C248.2 312.5 256.2 316.3 264.0 319.5C271.8 322.7 279.3 325.4 287.0 328.1C294.7 330.8 302.3 333.4 310.0 335.8C317.7 338.2 325.3 340.4 333.0 342.4C340.7 344.4 348.2 346.2 356.0 347.8C363.8 349.5 372.2 351.0 380.0 352.2C387.8 353.4 395.3 354.3 403.0 355.1C410.7 356.0 418.2 356.6 426.0 357.2C433.8 357.8 440.0 358.0 450.0 358.7C460.0 359.5 473.8 359.9 486.0 361.6C498.2 363.2 516.8 367.4 523.0 368.6" stroke="#c4f2ea" stroke-width="4.5" fill="none" opacity="0.95"/>
<path d="M3.0 160.6C6.8 164.3 18.2 175.7 26.0 182.4C33.8 189.2 41.8 195.3 50.0 201.1C58.2 207.0 66.7 212.4 75.0 217.6C83.3 222.8 91.7 227.5 100.0 232.2C108.3 236.9 116.7 241.3 125.0 245.7C133.3 250.1 140.5 253.8 150.0 258.6C159.5 263.5 171.2 269.4 182.0 274.9C192.8 280.4 205.3 286.6 215.0 291.4C224.7 296.2 231.8 299.7 240.0 303.6C248.2 307.5 256.2 311.4 264.0 314.7C271.8 318.1 279.3 320.9 287.0 323.8C294.7 326.7 302.3 329.4 310.0 332.0C317.7 334.5 325.3 336.9 333.0 339.0C340.7 341.2 348.2 343.1 356.0 344.9C363.8 346.7 372.2 348.3 380.0 349.7C387.8 351.1 395.3 352.1 403.0 353.1C410.7 354.1 418.2 354.9 426.0 355.6C433.8 356.4 440.0 356.7 450.0 357.6C460.0 358.6 473.8 359.3 486.0 361.2C498.2 363.0 516.8 367.6 523.0 368.9" stroke="#c4f2ea" stroke-width="4.5" fill="none" opacity="0.95"/>
<path d="M3.0 150.6C6.8 154.5 18.2 166.4 26.0 173.5C33.8 180.6 41.8 187.1 50.0 193.3C58.2 199.5 66.7 205.4 75.0 210.9C83.3 216.5 91.7 221.6 100.0 226.6C108.3 231.7 116.7 236.5 125.0 241.3C133.3 246.1 140.5 250.1 150.0 255.4C159.5 260.7 171.2 267.2 182.0 273.1C192.8 279.1 205.3 285.9 215.0 291.1C224.7 296.4 231.8 300.2 240.0 304.5C248.2 308.7 256.2 313.1 264.0 316.7C271.8 320.3 279.3 323.2 287.0 326.2C294.7 329.2 302.3 332.1 310.0 334.8C317.7 337.5 325.3 340.0 333.0 342.3C340.7 344.7 348.2 346.7 356.0 348.7C363.8 350.6 372.2 352.4 380.0 353.9C387.8 355.5 395.3 356.7 403.0 357.8C410.7 358.9 418.2 359.8 426.0 360.7C433.8 361.6 440.0 362.1 450.0 363.2C460.0 364.3 473.8 365.3 486.0 367.4C498.2 369.6 516.8 374.5 523.0 375.9" stroke="#c4f2ea" stroke-width="4.5" fill="none" opacity="0.95"/>
<path d="M3.0 168.0C6.8 171.6 18.2 182.8 26.0 189.5C33.8 196.1 41.8 202.1 50.0 207.8C58.2 213.5 66.7 218.9 75.0 223.9C83.3 229.0 91.7 233.6 100.0 238.1C108.3 242.7 116.7 247.0 125.0 251.3C133.3 255.6 140.5 259.1 150.0 263.9C159.5 268.6 171.2 274.4 182.0 279.7C192.8 285.0 205.3 291.1 215.0 295.7C224.7 300.3 231.8 303.7 240.0 307.5C248.2 311.3 256.2 315.0 264.0 318.3C271.8 321.6 279.3 324.3 287.0 327.1C294.7 329.8 302.3 332.5 310.0 334.9C317.7 337.3 325.3 339.6 333.0 341.7C340.7 343.7 348.2 345.6 356.0 347.3C363.8 348.9 372.2 350.5 380.0 351.7C387.8 353.0 395.3 354.0 403.0 354.8C410.7 355.7 418.2 356.4 426.0 357.0C433.8 357.7 440.0 357.9 450.0 358.7C460.0 359.5 473.8 360.1 486.0 361.8C498.2 363.5 516.8 367.8 523.0 369.0" stroke="#c4f2ea" stroke-width="4.5" fill="none" opacity="0.95"/>
<path d="M3.0 149.8C6.8 153.6 18.2 165.5 26.0 172.6C33.8 179.8 41.8 186.2 50.0 192.4C58.2 198.6 66.7 204.5 75.0 210.0C83.3 215.6 91.7 220.7 100.0 225.7C108.3 230.8 116.7 235.6 125.0 240.3C133.3 245.1 140.5 249.1 150.0 254.4C159.5 259.7 171.2 266.2 182.0 272.1C192.8 278.1 205.3 284.9 215.0 290.1C224.7 295.4 231.8 299.2 240.0 303.4C248.2 307.7 256.2 312.0 264.0 315.7C271.8 319.3 279.3 322.2 287.0 325.2C294.7 328.2 302.3 331.1 310.0 333.8C317.7 336.5 325.3 339.0 333.0 341.3C340.7 343.7 348.2 345.7 356.0 347.7C363.8 349.6 372.2 351.4 380.0 353.0C387.8 354.5 395.3 355.7 403.0 356.8C410.7 358.0 418.2 358.9 426.0 359.8C433.8 360.7 440.0 361.2 450.0 362.3C460.0 363.4 473.8 364.4 486.0 366.5C498.2 368.7 516.8 373.6 523.0 375.0" stroke="#c4f2ea" stroke-width="4.5" fill="none" opacity="0.95"/>
<path d="M3.0 156.4C6.8 160.2 18.2 171.9 26.0 178.9C33.8 185.9 41.8 192.2 50.0 198.3C58.2 204.4 66.7 210.1 75.0 215.5C83.3 220.9 91.7 225.8 100.0 230.8C108.3 235.7 116.7 240.3 125.0 245.0C133.3 249.6 140.5 253.5 150.0 258.7C159.5 263.8 171.2 270.1 182.0 275.9C192.8 281.6 205.3 288.3 215.0 293.3C224.7 298.4 231.8 302.1 240.0 306.2C248.2 310.3 256.2 314.6 264.0 318.1C271.8 321.6 279.3 324.3 287.0 327.2C294.7 330.1 302.3 332.9 310.0 335.5C317.7 338.0 325.3 340.5 333.0 342.7C340.7 344.8 348.2 346.8 356.0 348.6C363.8 350.4 372.2 352.1 380.0 353.5C387.8 354.9 395.3 356.0 403.0 357.0C410.7 358.0 418.2 358.8 426.0 359.6C433.8 360.4 440.0 360.8 450.0 361.7C460.0 362.7 473.8 363.5 486.0 365.4C498.2 367.3 516.8 372.0 523.0 373.3" stroke="#c4f2ea" stroke-width="4.5" fill="none" opacity="0.95"/>
<path d="M3.0 151.0C6.8 154.9 18.2 166.8 26.0 173.9C33.8 181.0 41.8 187.4 50.0 193.6C58.2 199.8 66.7 205.6 75.0 211.2C83.3 216.7 91.7 221.8 100.0 226.8C108.3 231.9 116.7 236.7 125.0 241.4C133.3 246.2 140.5 250.2 150.0 255.5C159.5 260.8 171.2 267.2 182.0 273.2C192.8 279.1 205.3 285.9 215.0 291.1C224.7 296.3 231.8 300.1 240.0 304.4C248.2 308.6 256.2 313.0 264.0 316.6C271.8 320.1 279.3 322.8 287.0 325.7C294.7 328.6 302.3 331.4 310.0 334.0C317.7 336.6 325.3 339.0 333.0 341.2C340.7 343.4 348.2 345.4 356.0 347.2C363.8 349.0 372.2 350.7 380.0 352.1C387.8 353.5 395.3 354.6 403.0 355.6C410.7 356.6 418.2 357.4 426.0 358.2C433.8 359.0 440.0 359.4 450.0 360.3C460.0 361.3 473.8 362.1 486.0 364.0C498.2 366.0 516.8 370.6 523.0 371.9" stroke="#c4f2ea" stroke-width="4.5" fill="none" opacity="0.95"/>
<path d="M3.0 167.8C6.8 171.4 18.2 182.7 26.0 189.3C33.8 196.0 41.8 202.0 50.0 207.7C58.2 213.5 66.7 218.8 75.0 223.9C83.3 228.9 91.7 233.5 100.0 238.1C108.3 242.7 116.7 247.0 125.0 251.3C133.3 255.6 140.5 259.2 150.0 263.9C159.5 268.7 171.2 274.5 182.0 279.8C192.8 285.1 205.3 291.2 215.0 295.9C224.7 300.5 231.8 303.9 240.0 307.7C248.2 311.5 256.2 315.2 264.0 318.6C271.8 321.9 279.3 324.8 287.0 327.8C294.7 330.7 302.3 333.4 310.0 336.0C317.7 338.6 325.3 341.0 333.0 343.2C340.7 345.4 348.2 347.4 356.0 349.2C363.8 351.0 372.2 352.7 380.0 354.1C387.8 355.5 395.3 356.6 403.0 357.7C410.7 358.7 418.2 359.5 426.0 360.3C433.8 361.0 440.0 361.4 450.0 362.4C460.0 363.4 473.8 364.2 486.0 366.1C498.2 368.1 516.8 372.7 523.0 374.0" stroke="#c4f2ea" stroke-width="4.5" fill="none" opacity="0.95"/>
<path d="M3.0 155.3C6.8 158.9 18.2 170.5 26.0 177.3C33.8 184.2 41.8 190.3 50.0 196.3C58.2 202.2 66.7 207.7 75.0 213.0C83.3 218.2 91.7 223.1 100.0 227.8C108.3 232.6 116.7 237.1 125.0 241.6C133.3 246.1 140.5 249.8 150.0 254.8C159.5 259.8 171.2 265.8 182.0 271.4C192.8 277.0 205.3 283.4 215.0 288.2C224.7 293.1 231.8 296.7 240.0 300.6C248.2 304.6 256.2 308.5 264.0 312.1C271.8 315.6 279.3 318.7 287.0 321.9C294.7 325.0 302.3 328.0 310.0 330.8C317.7 333.6 325.3 336.2 333.0 338.6C340.7 341.0 348.2 343.2 356.0 345.2C363.8 347.3 372.2 349.2 380.0 350.8C387.8 352.5 395.3 353.8 403.0 355.0C410.7 356.2 418.2 357.2 426.0 358.2C433.8 359.2 440.0 359.8 450.0 361.0C460.0 362.3 473.8 363.5 486.0 365.7C498.2 368.0 516.8 373.2 523.0 374.7" stroke="#c4f2ea" stroke-width="4.5" fill="none" opacity="0.95"/>
<path d="M3.0 170.2C6.8 173.7 18.2 184.8 26.0 191.3C33.8 197.8 41.8 203.6 50.0 209.2C58.2 214.8 66.7 220.0 75.0 224.9C83.3 229.8 91.7 234.2 100.0 238.6C108.3 243.0 116.7 247.2 125.0 251.3C133.3 255.5 140.5 258.9 150.0 263.5C159.5 268.0 171.2 273.6 182.0 278.7C192.8 283.8 205.3 289.7 215.0 294.2C224.7 298.6 231.8 301.9 240.0 305.5C248.2 309.1 256.2 312.7 264.0 315.9C271.8 319.1 279.3 322.0 287.0 324.8C294.7 327.7 302.3 330.4 310.0 332.9C317.7 335.4 325.3 337.7 333.0 339.9C340.7 342.0 348.2 343.9 356.0 345.6C363.8 347.4 372.2 349.0 380.0 350.3C387.8 351.7 395.3 352.7 403.0 353.6C410.7 354.6 418.2 355.3 426.0 356.0C433.8 356.7 440.0 357.0 450.0 357.9C460.0 358.8 473.8 359.5 486.0 361.3C498.2 363.1 516.8 367.6 523.0 368.9" stroke="#c4f2ea" stroke-width="4.5" fill="none" opacity="0.95"/>
<path d="M22.0 56.0C28.3 62.7 47.0 85.8 60.0 96.0C73.0 106.2 85.0 107.7 100.0 117.5C115.0 127.3 135.0 142.9 150.0 155.0C165.0 167.1 175.8 178.8 190.0 190.0C204.2 201.2 222.5 213.8 235.0 222.0C247.5 230.2 254.2 234.8 265.0 239.0C275.8 243.2 286.2 244.7 300.0 247.0C313.8 249.3 331.3 249.5 348.0 253.0C364.7 256.5 381.3 263.7 400.0 268.0C418.7 272.3 439.5 275.7 460.0 279.0C480.5 282.3 512.5 286.5 523.0 288.0" stroke="#c4f2ea" stroke-width="4.5" fill="none" opacity=".22"/>
<path d="M77.5 56.0C81.2 59.1 90.2 66.4 100.0 74.7C109.8 83.0 122.2 93.9 136.0 106.0C149.8 118.1 167.6 133.7 182.5 147.5C197.4 161.3 212.4 175.4 225.6 188.8C238.8 202.2 251.3 216.6 261.5 228.0C271.7 239.4 278.5 247.8 286.6 257.0C294.7 266.2 301.1 275.0 310.0 283.0C318.9 291.0 328.3 297.2 340.0 305.0C351.7 312.8 365.0 322.2 380.0 330.0C395.0 337.8 406.2 345.0 430.0 352.0C453.8 359.0 507.5 368.7 523.0 372.0" stroke="#c4f2ea" stroke-width="4.5" fill="none" opacity=".22"/>
<path d="M3.0 104.1C13.8 110.5 46.3 130.1 68.0 142.8C89.7 155.6 111.3 168.2 133.0 180.6C154.7 192.9 176.2 205.2 198.0 217.2C219.8 229.2 242.3 244.1 264.0 252.8C285.7 261.5 306.5 264.1 328.0 269.6C349.5 275.0 371.3 280.2 393.0 285.3C414.7 290.4 436.3 295.3 458.0 300.0C479.7 304.8 512.2 311.4 523.0 313.7" stroke="#1b7051" stroke-width="1.05" fill="none" opacity="0.9"/>
<path d="M3.0 79.2C13.8 87.1 46.3 111.2 68.0 126.5C89.7 141.8 111.3 156.6 133.0 171.0C154.7 185.3 176.2 199.2 198.0 212.6C219.8 226.0 242.3 242.7 264.0 251.4C285.7 260.0 306.5 260.0 328.0 264.4C349.5 268.8 371.3 273.2 393.0 277.7C414.7 282.2 436.3 286.7 458.0 291.2C479.7 295.7 512.2 302.6 523.0 304.9" stroke="#1c6a55" stroke-width="1.05" fill="none" opacity="0.9"/>
<path d="M3.0 70.4C13.8 78.0 46.3 100.6 68.0 116.0C89.7 131.4 111.3 147.0 133.0 162.8C154.7 178.6 176.2 194.7 198.0 210.9C219.8 227.2 242.3 249.5 264.0 260.3C285.7 271.1 306.5 270.9 328.0 275.6C349.5 280.3 371.3 284.6 393.0 288.4C414.7 292.3 436.3 295.8 458.0 298.8C479.7 301.9 512.2 305.5 523.0 306.8" stroke="#1b724f" stroke-width="1.05" fill="none" opacity="0.9"/>
<path d="M3.0 122.8C13.8 127.9 46.3 143.1 68.0 153.6C89.7 164.1 111.3 174.8 133.0 185.8C154.7 196.8 176.2 208.0 198.0 219.4C219.8 230.9 242.3 246.8 264.0 254.5C285.7 262.1 306.5 261.8 328.0 265.2C349.5 268.5 371.3 271.7 393.0 274.8C414.7 277.8 436.3 280.6 458.0 283.3C479.7 285.9 512.2 289.5 523.0 290.7" stroke="#1c6c54" stroke-width="1.05" fill="none" opacity="0.9"/>
<path d="M3.0 79.7C13.8 86.8 46.3 108.2 68.0 122.2C89.7 136.1 111.3 149.9 133.0 163.6C154.7 177.2 176.2 190.7 198.0 203.9C219.8 217.2 242.3 234.7 264.0 243.3C285.7 251.8 306.5 251.5 328.0 255.4C349.5 259.3 371.3 263.1 393.0 266.7C414.7 270.4 436.3 273.9 458.0 277.2C479.7 280.6 512.2 285.3 523.0 286.9" stroke="#1b7150" stroke-width="1.05" fill="none" opacity="0.9"/>
<path d="M3.0 110.3C13.8 116.9 46.3 136.9 68.0 149.7C89.7 162.5 111.3 175.0 133.0 187.0C154.7 199.1 176.2 210.8 198.0 222.2C219.8 233.6 242.3 247.6 264.0 255.2C285.7 262.8 306.5 263.9 328.0 268.0C349.5 272.1 371.3 276.0 393.0 279.8C414.7 283.7 436.3 287.3 458.0 290.9C479.7 294.4 512.2 299.3 523.0 301.0" stroke="#1c6d53" stroke-width="1.05" fill="none" opacity="0.9"/>
<path d="M3.0 154.8C13.8 160.0 46.3 176.1 68.0 186.1C89.7 196.2 111.3 205.9 133.0 215.1C154.7 224.4 176.2 233.2 198.0 241.7C219.8 250.1 242.3 259.8 264.0 265.9C285.7 271.9 306.5 273.9 328.0 277.9C349.5 281.8 371.3 285.7 393.0 289.4C414.7 293.2 436.3 296.9 458.0 300.5C479.7 304.2 512.2 309.4 523.0 311.2" stroke="#1a754d" stroke-width="1.05" fill="none" opacity="0.9"/>
<path d="M3.0 88.9C13.8 95.3 46.3 114.6 68.0 127.2C89.7 139.9 111.3 152.5 133.0 164.9C154.7 177.3 176.2 189.7 198.0 201.9C219.8 214.1 242.3 228.6 264.0 238.1C285.7 247.6 306.5 252.3 328.0 258.9C349.5 265.5 371.3 271.7 393.0 277.6C414.7 283.5 436.3 289.1 458.0 294.3C479.7 299.6 512.2 306.5 523.0 309.0" stroke="#1c6c54" stroke-width="1.05" fill="none" opacity="0.9"/>
<path d="M3.0 151.1C13.8 155.6 46.3 169.1 68.0 178.2C89.7 187.2 111.3 196.4 133.0 205.6C154.7 214.8 176.2 224.0 198.0 233.3C219.8 242.6 242.3 255.2 264.0 261.4C285.7 267.7 306.5 268.1 328.0 270.9C349.5 273.7 371.3 276.1 393.0 278.2C414.7 280.2 436.3 281.9 458.0 283.2C479.7 284.5 512.2 285.5 523.0 286.0" stroke="#1a774b" stroke-width="1.05" fill="none" opacity="0.9"/>
<path d="M3.0 153.2C13.8 157.6 46.3 171.3 68.0 179.8C89.7 188.4 111.3 196.6 133.0 204.5C154.7 212.4 176.2 219.9 198.0 227.2C219.8 234.4 242.3 242.3 264.0 247.9C285.7 253.5 306.5 256.8 328.0 260.7C349.5 264.7 371.3 268.4 393.0 271.7C414.7 275.1 436.3 278.1 458.0 280.9C479.7 283.6 512.2 287.0 523.0 288.2" stroke="#1a754d" stroke-width="1.05" fill="none" opacity="0.9"/>
<path d="M3.0 70.1C13.8 78.1 46.3 102.5 68.0 118.1C89.7 133.6 111.3 148.7 133.0 163.4C154.7 178.0 176.2 192.2 198.0 206.0C219.8 219.8 242.3 236.5 264.0 246.0C285.7 255.5 306.5 257.3 328.0 263.0C349.5 268.7 371.3 274.4 393.0 280.2C414.7 285.9 436.3 291.7 458.0 297.5C479.7 303.3 512.2 312.0 523.0 314.9" stroke="#1c6956" stroke-width="1.05" fill="none" opacity="0.9"/>
<path d="M3.0 71.4C13.8 78.2 46.3 98.5 68.0 112.2C89.7 125.9 111.3 139.7 133.0 153.6C154.7 167.4 176.2 181.4 198.0 195.4C219.8 209.5 242.3 227.4 264.0 237.8C285.7 248.2 306.5 251.2 328.0 257.6C349.5 264.0 371.3 270.2 393.0 276.2C414.7 282.2 436.3 288.0 458.0 293.6C479.7 299.3 512.2 307.2 523.0 309.9" stroke="#1c6c54" stroke-width="1.05" fill="none" opacity="0.9"/>
<path d="M3.0 79.7C13.8 87.7 46.3 111.8 68.0 127.4C89.7 142.9 111.3 158.1 133.0 172.9C154.7 187.8 176.2 202.3 198.0 216.5C219.8 230.6 242.3 249.7 264.0 258.0C285.7 266.2 306.5 263.1 328.0 265.7C349.5 268.3 371.3 271.0 393.0 273.6C414.7 276.3 436.3 279.0 458.0 281.7C479.7 284.4 512.2 288.6 523.0 289.9" stroke="#1c6c54" stroke-width="1.05" fill="none" opacity="0.9"/>
<path d="M3.0 81.8C13.8 89.3 46.3 112.3 68.0 126.7C89.7 141.2 111.3 155.3 133.0 168.8C154.7 182.3 176.2 195.3 198.0 207.9C219.8 220.4 242.3 235.0 264.0 244.1C285.7 253.2 306.5 256.4 328.0 262.5C349.5 268.5 371.3 274.5 393.0 280.4C414.7 286.4 436.3 292.2 458.0 298.0C479.7 303.8 512.2 312.3 523.0 315.1" stroke="#1b724f" stroke-width="1.05" fill="none" opacity="0.9"/>
<path d="M3.0 102.1C13.8 109.9 46.3 134.0 68.0 149.3C89.7 164.6 111.3 179.5 133.0 194.0C154.7 208.4 176.2 222.5 198.0 236.1C219.8 249.7 242.3 265.6 264.0 275.7C285.7 285.8 306.5 289.7 328.0 296.9C349.5 304.0 371.3 311.2 393.0 318.5C414.7 325.8 436.3 333.2 458.0 340.6C479.7 348.1 512.2 359.5 523.0 363.3" stroke="#197b48" stroke-width="1.05" fill="none" opacity="0.9"/>
<path d="M3.0 102.3C13.8 109.4 46.3 131.0 68.0 145.1C89.7 159.3 111.3 173.3 133.0 187.2C154.7 201.1 176.2 214.9 198.0 228.5C219.8 242.1 242.3 258.3 264.0 268.9C285.7 279.5 306.5 284.4 328.0 292.0C349.5 299.6 371.3 307.1 393.0 314.6C414.7 322.1 436.3 329.4 458.0 336.7C479.7 344.0 512.2 354.8 523.0 358.4" stroke="#1c6a55" stroke-width="1.05" fill="none" opacity="0.9"/>
<path d="M3.0 92.3C13.8 100.9 46.3 127.1 68.0 144.0C89.7 160.8 111.3 177.3 133.0 193.3C154.7 209.4 176.2 225.1 198.0 240.4C219.8 255.7 242.3 275.7 264.0 285.1C285.7 294.5 306.5 293.0 328.0 296.8C349.5 300.5 371.3 304.1 393.0 307.6C414.7 311.0 436.3 314.3 458.0 317.5C479.7 320.7 512.2 325.1 523.0 326.6" stroke="#1b7051" stroke-width="1.05" fill="none" opacity="0.9"/>
<path d="M3.0 162.7C13.8 168.5 46.3 186.7 68.0 197.7C89.7 208.8 111.3 219.2 133.0 229.0C154.7 238.8 176.2 247.9 198.0 256.5C219.8 265.0 242.3 273.5 264.0 280.2C285.7 286.9 306.5 291.1 328.0 296.6C349.5 302.1 371.3 307.6 393.0 313.2C414.7 318.7 436.3 324.2 458.0 329.8C479.7 335.3 512.2 343.7 523.0 346.5" stroke="#197a49" stroke-width="1.05" fill="none" opacity="0.9"/>
<path d="M3.0 158.6C13.8 164.4 46.3 181.7 68.0 193.2C89.7 204.8 111.3 216.3 133.0 227.8C154.7 239.3 176.2 250.9 198.0 262.4C219.8 273.9 242.3 289.2 264.0 296.9C285.7 304.6 306.5 305.1 328.0 308.5C349.5 311.9 371.3 314.8 393.0 317.3C414.7 319.8 436.3 321.9 458.0 323.5C479.7 325.1 512.2 326.4 523.0 327.0" stroke="#17883f" stroke-width="1.05" fill="none" opacity="0.9"/>
<path d="M3.0 100.9C13.8 109.9 46.3 137.4 68.0 155.0C89.7 172.7 111.3 190.0 133.0 206.9C154.7 223.7 176.2 240.2 198.0 256.3C219.8 272.4 242.3 292.8 264.0 303.5C285.7 314.2 306.5 315.0 328.0 320.5C349.5 326.0 371.3 331.3 393.0 336.4C414.7 341.6 436.3 346.5 458.0 351.2C479.7 356.0 512.2 362.6 523.0 364.9" stroke="#1c6b55" stroke-width="1.05" fill="none" opacity="0.9"/>
<path d="M3.0 88.1C13.8 97.9 46.3 127.5 68.0 146.4C89.7 165.4 111.3 183.9 133.0 201.9C154.7 219.9 176.2 237.4 198.0 254.4C219.8 271.5 242.3 294.9 264.0 304.1C285.7 313.4 306.5 308.2 328.0 310.1C349.5 312.0 371.3 313.9 393.0 315.8C414.7 317.6 436.3 319.4 458.0 321.2C479.7 322.9 512.2 325.5 523.0 326.3" stroke="#1a764c" stroke-width="1.05" fill="none" opacity="0.9"/>
<path d="M3.0 133.3C13.8 139.8 46.3 159.7 68.0 172.1C89.7 184.5 111.3 196.5 133.0 207.9C154.7 219.4 176.2 230.3 198.0 240.8C219.8 251.2 242.3 263.7 264.0 270.7C285.7 277.7 306.5 278.5 328.0 282.7C349.5 286.8 371.3 291.0 393.0 295.3C414.7 299.6 436.3 304.0 458.0 308.6C479.7 313.1 512.2 320.2 523.0 322.5" stroke="#1b734e" stroke-width="1.05" fill="none" opacity="0.9"/>
<path d="M3.0 139.5C6.8 143.3 18.2 154.9 26.0 161.9C33.8 168.8 41.8 175.1 50.0 181.1C58.2 187.2 66.7 192.8 75.0 198.2C83.3 203.5 91.7 208.4 100.0 213.3C108.3 218.2 116.7 222.8 125.0 227.4C133.3 232.0 140.5 235.8 150.0 240.9C159.5 246.0 171.2 252.2 182.0 257.9C192.8 263.6 205.3 270.2 215.0 275.2C224.7 280.2 231.8 283.8 240.0 287.9C248.2 292.0 256.2 295.9 264.0 299.6C271.8 303.3 279.3 306.8 287.0 310.1C294.7 313.5 302.3 316.7 310.0 319.7C317.7 322.7 325.3 325.6 333.0 328.2C340.7 330.9 348.2 333.3 356.0 335.6C363.8 337.8 372.2 340.0 380.0 341.9C387.8 343.7 395.3 345.3 403.0 346.7C410.7 348.2 418.2 349.4 426.0 350.7C433.8 351.9 440.0 352.6 450.0 354.2C460.0 355.7 473.8 357.3 486.0 360.0C498.2 362.6 516.8 368.4 523.0 370.0" stroke="#188442" stroke-width="1.1" fill="none" opacity="0.95"/>
<path d="M3.0 121.3C6.8 125.5 18.2 138.5 26.0 146.4C33.8 154.2 41.8 161.4 50.0 168.5C58.2 175.5 66.7 182.1 75.0 188.5C83.3 194.9 91.7 200.8 100.0 206.6C108.3 212.5 116.7 218.1 125.0 223.7C133.3 229.3 140.5 234.0 150.0 240.2C159.5 246.5 171.2 254.1 182.0 261.1C192.8 268.1 205.3 276.1 215.0 282.3C224.7 288.4 231.8 292.9 240.0 298.0C248.2 303.0 256.2 308.5 264.0 312.6C271.8 316.7 279.3 319.3 287.0 322.5C294.7 325.6 302.3 328.6 310.0 331.4C317.7 334.3 325.3 336.9 333.0 339.3C340.7 341.8 348.2 344.0 356.0 346.0C363.8 348.1 372.2 350.1 380.0 351.7C387.8 353.4 395.3 354.7 403.0 355.9C410.7 357.2 418.2 358.2 426.0 359.2C433.8 360.3 440.0 360.8 450.0 362.1C460.0 363.4 473.8 364.6 486.0 367.0C498.2 369.3 516.8 374.5 523.0 376.0" stroke="#188342" stroke-width="1.1" fill="none" opacity="0.95"/>
<path d="M3.0 145.3C6.8 149.2 18.2 161.3 26.0 168.6C33.8 175.8 41.8 182.3 50.0 188.7C58.2 195.1 66.7 201.0 75.0 206.7C83.3 212.4 91.7 217.6 100.0 222.8C108.3 228.0 116.7 232.9 125.0 237.9C133.3 242.8 140.5 246.9 150.0 252.4C159.5 257.8 171.2 264.5 182.0 270.6C192.8 276.7 205.3 283.7 215.0 289.1C224.7 294.5 231.8 298.4 240.0 302.8C248.2 307.2 256.2 311.8 264.0 315.5C271.8 319.1 279.3 321.9 287.0 324.9C294.7 327.9 302.3 330.8 310.0 333.5C317.7 336.2 325.3 338.7 333.0 341.0C340.7 343.3 348.2 345.4 356.0 347.3C363.8 349.3 372.2 351.1 380.0 352.6C387.8 354.1 395.3 355.3 403.0 356.4C410.7 357.5 418.2 358.4 426.0 359.3C433.8 360.2 440.0 360.7 450.0 361.8C460.0 362.9 473.8 363.9 486.0 366.0C498.2 368.1 516.8 373.0 523.0 374.4" stroke="#178640" stroke-width="1.1" fill="none" opacity="0.95"/>
<path d="M3.0 138.9C6.8 142.8 18.2 155.2 26.0 162.5C33.8 169.9 41.8 176.6 50.0 183.2C58.2 189.7 66.7 195.8 75.0 201.7C83.3 207.5 91.7 212.9 100.0 218.2C108.3 223.6 116.7 228.7 125.0 233.8C133.3 238.8 140.5 243.1 150.0 248.7C159.5 254.4 171.2 261.3 182.0 267.6C192.8 273.9 205.3 281.2 215.0 286.8C224.7 292.3 231.8 296.4 240.0 300.9C248.2 305.5 256.2 310.3 264.0 314.0C271.8 317.8 279.3 320.5 287.0 323.5C294.7 326.5 302.3 329.3 310.0 332.0C317.7 334.7 325.3 337.2 333.0 339.5C340.7 341.8 348.2 343.8 356.0 345.8C363.8 347.7 372.2 349.5 380.0 351.0C387.8 352.5 395.3 353.7 403.0 354.8C410.7 355.9 418.2 356.7 426.0 357.6C433.8 358.5 440.0 359.0 450.0 360.1C460.0 361.2 473.8 362.1 486.0 364.2C498.2 366.3 516.8 371.2 523.0 372.6" stroke="#159535" stroke-width="1.1" fill="none" opacity="0.95"/>
<path d="M3.0 118.0C6.8 122.1 18.2 134.9 26.0 142.6C33.8 150.3 41.8 157.4 50.0 164.2C58.2 171.0 66.7 177.5 75.0 183.7C83.3 189.9 91.7 195.6 100.0 201.3C108.3 206.9 116.7 212.3 125.0 217.8C133.3 223.2 140.5 227.7 150.0 233.7C159.5 239.7 171.2 247.1 182.0 253.8C192.8 260.6 205.3 268.4 215.0 274.3C224.7 280.2 231.8 284.6 240.0 289.5C248.2 294.3 256.2 299.5 264.0 303.5C271.8 307.5 279.3 310.4 287.0 313.6C294.7 316.8 302.3 319.9 310.0 322.8C317.7 325.7 325.3 328.4 333.0 330.9C340.7 333.4 348.2 335.7 356.0 337.8C363.8 339.9 372.2 342.0 380.0 343.7C387.8 345.4 395.3 346.8 403.0 348.1C410.7 349.5 418.2 350.5 426.0 351.6C433.8 352.7 440.0 353.4 450.0 354.7C460.0 356.1 473.8 357.5 486.0 359.9C498.2 362.3 516.8 367.7 523.0 369.3" stroke="#168c3c" stroke-width="1.1" fill="none" opacity="0.95"/>
<path d="M3.0 160.9C6.8 164.5 18.2 176.0 26.0 182.8C33.8 189.6 41.8 195.7 50.0 201.6C58.2 207.5 66.7 212.9 75.0 218.1C83.3 223.3 91.7 228.1 100.0 232.8C108.3 237.5 116.7 241.9 125.0 246.4C133.3 250.8 140.5 254.5 150.0 259.4C159.5 264.4 171.2 270.3 182.0 275.8C192.8 281.3 205.3 287.6 215.0 292.5C224.7 297.3 231.8 300.8 240.0 304.7C248.2 308.6 256.2 312.5 264.0 316.0C271.8 319.4 279.3 322.5 287.0 325.5C294.7 328.6 302.3 331.5 310.0 334.2C317.7 336.9 325.3 339.5 333.0 341.8C340.7 344.2 348.2 346.3 356.0 348.2C363.8 350.2 372.2 352.0 380.0 353.6C387.8 355.1 395.3 356.3 403.0 357.5C410.7 358.7 418.2 359.6 426.0 360.5C433.8 361.4 440.0 361.9 450.0 363.1C460.0 364.2 473.8 365.3 486.0 367.4C498.2 369.6 516.8 374.6 523.0 376.0" stroke="#159535" stroke-width="1.1" fill="none" opacity="0.95"/>
<path d="M3.0 132.3C6.8 136.1 18.2 148.0 26.0 155.1C33.8 162.2 41.8 168.6 50.0 174.8C58.2 181.0 66.7 186.8 75.0 192.3C83.3 197.8 91.7 202.9 100.0 207.9C108.3 213.0 116.7 217.7 125.0 222.5C133.3 227.2 140.5 231.2 150.0 236.5C159.5 241.8 171.2 248.2 182.0 254.1C192.8 260.0 205.3 266.8 215.0 272.0C224.7 277.2 231.8 281.0 240.0 285.2C248.2 289.5 256.2 293.5 264.0 297.4C271.8 301.3 279.3 305.0 287.0 308.6C294.7 312.2 302.3 315.7 310.0 319.0C317.7 322.2 325.3 325.3 333.0 328.2C340.7 331.1 348.2 333.7 356.0 336.2C363.8 338.8 372.2 341.2 380.0 343.3C387.8 345.4 395.3 347.2 403.0 348.9C410.7 350.6 418.2 352.0 426.0 353.5C433.8 355.0 440.0 355.9 450.0 357.8C460.0 359.7 473.8 361.7 486.0 364.8C498.2 367.8 516.8 374.1 523.0 376.0" stroke="#168d3b" stroke-width="1.1" fill="none" opacity="0.95"/>
<path d="M3.0 98.7C25.8 118.1 92.3 185.4 140.0 215.0C187.7 244.5 261.0 265.3 289.0 275.9C317.0 286.6 301.3 277.8 308.2 278.9C315.1 280.1 322.8 281.2 330.4 283.0C338.0 284.8 346.8 287.4 353.9 289.9C361.0 292.5 367.3 295.3 373.1 298.2C378.8 301.2 384.1 304.6 388.5 307.7C393.0 310.7 396.8 313.7 399.7 316.6C402.5 319.6 404.5 322.7 405.8 325.3C407.2 327.9 407.6 329.7 407.7 332.2C407.8 334.7 407.4 337.6 406.5 340.3C405.5 343.0 403.9 346.3 402.1 348.6C400.4 350.8 398.2 352.5 396.0 353.7C393.7 354.9 391.8 355.7 388.5 355.7C385.2 355.7 381.0 355.2 376.2 353.9C371.3 352.6 364.6 349.8 359.5 348.0C354.3 346.2 350.1 344.8 345.3 343.2C340.4 341.5 335.6 340.1 330.4 338.1C325.3 336.0 319.2 333.5 314.3 331.0C309.5 328.5 306.0 325.7 301.4 323.3C296.7 320.9 291.2 318.5 286.5 316.6C281.9 314.7 275.7 312.7 273.5 312.0" stroke="#1d6757" stroke-width="1.1" fill="none" opacity=".95"/>
<path d="M3.0 151.0C25.8 160.6 92.3 187.6 140.0 208.4C187.7 229.3 259.5 263.8 289.0 276.1C318.5 288.4 306.9 280.1 317.0 282.1C327.1 284.2 338.5 286.1 349.6 288.5C360.8 290.9 373.6 293.7 384.0 296.4C394.4 299.1 403.6 301.7 412.0 304.6C420.5 307.4 428.2 310.6 434.6 313.6C441.1 316.5 446.7 319.4 450.9 322.3C455.1 325.2 458.0 328.4 460.0 331.0C461.9 333.6 462.5 335.4 462.7 337.9C462.8 340.4 462.2 343.3 460.9 346.0C459.5 348.7 457.1 352.0 454.5 354.2C452.0 356.4 448.8 358.2 445.5 359.4C442.2 360.6 439.5 361.4 434.6 361.5C429.8 361.6 423.6 361.2 416.5 360.0C409.5 358.8 399.7 356.2 392.1 354.4C384.6 352.6 378.4 351.1 371.3 349.3C364.2 347.5 357.1 345.8 349.6 343.4C342.1 341.0 333.2 337.8 326.1 334.8C319.0 331.8 313.9 328.4 307.1 325.3C300.3 322.2 292.2 318.9 285.4 316.1C278.6 313.4 269.6 310.2 266.4 309.0" stroke="#1b734e" stroke-width="1.1" fill="none" opacity=".95"/>
<path d="M3.0 101.7C25.8 119.2 92.3 177.2 140.0 207.1C187.7 237.1 257.7 267.6 289.0 281.5C320.3 295.3 313.8 287.5 327.7 290.2C341.7 292.9 357.3 295.3 372.7 297.8C388.1 300.2 405.8 302.5 420.2 304.9C434.5 307.2 447.2 309.2 458.9 312.0C470.6 314.8 481.2 318.2 490.1 321.7C499.1 325.1 506.8 329.1 512.6 332.8C518.5 336.5 522.4 340.7 525.1 343.7C527.8 346.7 528.7 348.5 528.9 350.9C529.1 353.4 528.2 356.1 526.4 358.3C524.5 360.5 521.2 362.9 517.6 364.4C514.1 365.9 509.7 366.7 505.1 367.3C500.6 367.8 496.8 368.0 490.1 367.6C483.5 367.2 474.9 366.3 465.2 364.9C455.4 363.5 441.8 361.0 431.4 359.3C421.0 357.6 412.5 356.4 402.7 354.7C392.9 352.9 383.1 351.3 372.7 348.7C362.3 346.1 350.0 342.5 340.2 339.0C330.4 335.5 323.4 331.6 314.0 327.7C304.6 323.8 293.4 319.3 284.0 315.6C274.6 311.9 262.1 307.1 257.8 305.3" stroke="#1a774c" stroke-width="1.1" fill="none" opacity=".95"/>
<path d="M3.0 141.1C25.8 152.9 92.3 190.7 140.0 211.6C187.7 232.5 256.2 255.1 289.0 266.5C321.8 277.9 319.5 275.9 336.7 279.8C353.8 283.7 373.0 286.9 392.0 290.1C410.9 293.2 432.7 295.3 450.4 298.5C468.1 301.8 483.7 304.7 498.0 309.7C512.4 314.7 525.5 321.5 536.5 328.7C547.5 336.0 557.0 345.3 564.1 353.1C571.3 360.8 576.2 369.5 579.5 375.2C582.8 381.0 583.9 384.8 584.1 387.7C584.4 390.6 583.4 392.1 581.1 392.8C578.7 393.5 574.6 392.8 570.3 391.8C565.9 390.8 560.6 388.7 554.9 386.8C549.3 384.9 544.7 382.9 536.5 380.3C528.3 377.7 517.8 373.9 505.7 371.0C493.7 368.0 477.0 364.7 464.2 362.5C451.4 360.3 440.9 359.5 428.9 357.8C416.8 356.1 404.8 354.8 392.0 352.2C379.2 349.6 364.1 345.9 352.0 342.1C340.0 338.3 331.3 334.1 319.7 329.6C308.2 325.1 294.4 319.7 282.9 315.2C271.3 310.6 256.0 304.4 250.6 302.2" stroke="#1b7150" stroke-width="1.1" fill="none" opacity=".95"/>
<path d="M3.0 157.4C6.8 161.1 18.2 172.8 26.0 179.7C33.8 186.6 41.8 192.8 50.0 198.8C58.2 204.9 66.7 210.5 75.0 215.8C83.3 221.1 91.7 226.0 100.0 230.9C108.3 235.7 116.7 240.3 125.0 244.8C133.3 249.4 140.5 253.2 150.0 258.3C159.5 263.4 171.2 269.5 182.0 275.2C192.8 280.9 205.3 287.4 215.0 292.3C224.7 297.3 231.8 300.9 240.0 305.0C248.2 309.0 256.2 313.1 264.0 316.6C271.8 320.1 279.3 322.9 287.0 325.8C294.7 328.7 302.3 331.4 310.0 334.0C317.7 336.6 325.3 339.0 333.0 341.2C340.7 343.4 348.2 345.4 356.0 347.2C363.8 349.0 372.2 350.7 380.0 352.1C387.8 353.5 395.3 354.6 403.0 355.6C410.7 356.6 418.2 357.4 426.0 358.2C433.8 359.0 440.0 359.4 450.0 360.3C460.0 361.3 473.8 362.1 486.0 364.0C498.2 366.0 516.8 370.6 523.0 371.9" stroke="#0ca020" stroke-width="1.1" fill="none" opacity="0.95"/>
<path d="M3.0 171.2C6.8 174.8 18.2 185.9 26.0 192.5C33.8 199.1 41.8 204.9 50.0 210.6C58.2 216.3 66.7 221.5 75.0 226.5C83.3 231.4 91.7 235.9 100.0 240.4C108.3 244.9 116.7 249.1 125.0 253.3C133.3 257.5 140.5 261.0 150.0 265.6C159.5 270.3 171.2 275.9 182.0 281.1C192.8 286.3 205.3 292.3 215.0 296.8C224.7 301.4 231.8 304.7 240.0 308.4C248.2 312.0 256.2 315.6 264.0 318.9C271.8 322.3 279.3 325.3 287.0 328.3C294.7 331.2 302.3 334.1 310.0 336.7C317.7 339.3 325.3 341.8 333.0 344.0C340.7 346.3 348.2 348.3 356.0 350.2C363.8 352.1 372.2 353.8 380.0 355.3C387.8 356.7 395.3 357.9 403.0 359.0C410.7 360.0 418.2 360.9 426.0 361.7C433.8 362.5 440.0 363.0 450.0 364.0C460.0 365.1 473.8 366.0 486.0 368.0C498.2 370.0 516.8 374.8 523.0 376.1" stroke="#18b030" stroke-width="1.1" fill="none" opacity="0.95"/>
<path d="M3.0 151.1C6.8 154.8 18.2 166.6 26.0 173.6C33.8 180.6 41.8 187.0 50.0 193.1C58.2 199.3 66.7 205.0 75.0 210.4C83.3 215.9 91.7 220.9 100.0 225.8C108.3 230.8 116.7 235.5 125.0 240.2C133.3 244.8 140.5 248.8 150.0 254.0C159.5 259.1 171.2 265.5 182.0 271.3C192.8 277.1 205.3 283.8 215.0 288.9C224.7 294.0 231.8 297.7 240.0 301.9C248.2 306.0 256.2 310.2 264.0 313.8C271.8 317.4 279.3 320.4 287.0 323.4C294.7 326.4 302.3 329.3 310.0 332.1C317.7 334.8 325.3 337.3 333.0 339.6C340.7 342.0 348.2 344.1 356.0 346.0C363.8 348.0 372.2 349.8 380.0 351.4C387.8 352.9 395.3 354.1 403.0 355.3C410.7 356.4 418.2 357.3 426.0 358.3C433.8 359.2 440.0 359.7 450.0 360.8C460.0 362.0 473.8 363.0 486.0 365.1C498.2 367.3 516.8 372.3 523.0 373.7" stroke="#0ca020" stroke-width="1.1" fill="none" opacity="0.95"/>
<path d="M3.0 155.7C6.8 159.4 18.2 171.1 26.0 178.1C33.8 185.0 41.8 191.3 50.0 197.3C58.2 203.4 66.7 209.0 75.0 214.4C83.3 219.8 91.7 224.7 100.0 229.5C108.3 234.4 116.7 239.0 125.0 243.6C133.3 248.2 140.5 252.1 150.0 257.2C159.5 262.3 171.2 268.5 182.0 274.2C192.8 279.9 205.3 286.5 215.0 291.5C224.7 296.5 231.8 300.2 240.0 304.3C248.2 308.3 256.2 312.5 264.0 316.0C271.8 319.5 279.3 322.4 287.0 325.3C294.7 328.3 302.3 331.1 310.0 333.7C317.7 336.3 325.3 338.8 333.0 341.1C340.7 343.3 348.2 345.3 356.0 347.2C363.8 349.1 372.2 350.8 380.0 352.3C387.8 353.7 395.3 354.9 403.0 355.9C410.7 357.0 418.2 357.8 426.0 358.7C433.8 359.5 440.0 359.9 450.0 360.9C460.0 362.0 473.8 362.9 486.0 364.9C498.2 366.9 516.8 371.7 523.0 373.0" stroke="#0ca020" stroke-width="1.1" fill="none" opacity="0.95"/>
<path d="M3.0 171.0C6.8 174.4 18.2 185.4 26.0 191.8C33.8 198.2 41.8 203.9 50.0 209.4C58.2 214.9 66.7 220.0 75.0 224.8C83.3 229.6 91.7 234.0 100.0 238.3C108.3 242.6 116.7 246.6 125.0 250.7C133.3 254.7 140.5 258.1 150.0 262.5C159.5 267.0 171.2 272.4 182.0 277.4C192.8 282.4 205.3 288.1 215.0 292.5C224.7 296.8 231.8 300.0 240.0 303.5C248.2 307.1 256.2 310.3 264.0 313.7C271.8 317.0 279.3 320.4 287.0 323.5C294.7 326.7 302.3 329.7 310.0 332.5C317.7 335.3 325.3 337.9 333.0 340.4C340.7 342.8 348.2 345.0 356.0 347.1C363.8 349.1 372.2 351.1 380.0 352.7C387.8 354.4 395.3 355.7 403.0 356.9C410.7 358.2 418.2 359.2 426.0 360.2C433.8 361.2 440.0 361.8 450.0 363.1C460.0 364.4 473.8 365.6 486.0 367.9C498.2 370.2 516.8 375.4 523.0 376.9" stroke="#0ca020" stroke-width="1.1" fill="none" opacity="0.95"/>
<path d="M3.0 170.9C6.8 174.4 18.2 185.6 26.0 192.2C33.8 198.8 41.8 204.7 50.0 210.4C58.2 216.1 66.7 221.3 75.0 226.3C83.3 231.3 91.7 235.9 100.0 240.4C108.3 244.9 116.7 249.1 125.0 253.3C133.3 257.6 140.5 261.1 150.0 265.8C159.5 270.5 171.2 276.1 182.0 281.4C192.8 286.6 205.3 292.6 215.0 297.2C224.7 301.8 231.8 305.1 240.0 308.8C248.2 312.5 256.2 316.3 264.0 319.5C271.8 322.7 279.3 325.4 287.0 328.1C294.7 330.8 302.3 333.4 310.0 335.8C317.7 338.2 325.3 340.4 333.0 342.4C340.7 344.4 348.2 346.2 356.0 347.8C363.8 349.5 372.2 351.0 380.0 352.2C387.8 353.4 395.3 354.3 403.0 355.1C410.7 356.0 418.2 356.6 426.0 357.2C433.8 357.8 440.0 358.0 450.0 358.7C460.0 359.5 473.8 359.9 486.0 361.6C498.2 363.2 516.8 367.4 523.0 368.6" stroke="#10a828" stroke-width="1.1" fill="none" opacity="0.95"/>
<path d="M3.0 160.6C6.8 164.3 18.2 175.7 26.0 182.4C33.8 189.2 41.8 195.3 50.0 201.1C58.2 207.0 66.7 212.4 75.0 217.6C83.3 222.8 91.7 227.5 100.0 232.2C108.3 236.9 116.7 241.3 125.0 245.7C133.3 250.1 140.5 253.8 150.0 258.6C159.5 263.5 171.2 269.4 182.0 274.9C192.8 280.4 205.3 286.6 215.0 291.4C224.7 296.2 231.8 299.7 240.0 303.6C248.2 307.5 256.2 311.4 264.0 314.7C271.8 318.1 279.3 320.9 287.0 323.8C294.7 326.7 302.3 329.4 310.0 332.0C317.7 334.5 325.3 336.9 333.0 339.0C340.7 341.2 348.2 343.1 356.0 344.9C363.8 346.7 372.2 348.3 380.0 349.7C387.8 351.1 395.3 352.1 403.0 353.1C410.7 354.1 418.2 354.9 426.0 355.6C433.8 356.4 440.0 356.7 450.0 357.6C460.0 358.6 473.8 359.3 486.0 361.2C498.2 363.0 516.8 367.6 523.0 368.9" stroke="#18b030" stroke-width="1.1" fill="none" opacity="0.95"/>
<path d="M3.0 150.6C6.8 154.5 18.2 166.4 26.0 173.5C33.8 180.6 41.8 187.1 50.0 193.3C58.2 199.5 66.7 205.4 75.0 210.9C83.3 216.5 91.7 221.6 100.0 226.6C108.3 231.7 116.7 236.5 125.0 241.3C133.3 246.1 140.5 250.1 150.0 255.4C159.5 260.7 171.2 267.2 182.0 273.1C192.8 279.1 205.3 285.9 215.0 291.1C224.7 296.4 231.8 300.2 240.0 304.5C248.2 308.7 256.2 313.1 264.0 316.7C271.8 320.3 279.3 323.2 287.0 326.2C294.7 329.2 302.3 332.1 310.0 334.8C317.7 337.5 325.3 340.0 333.0 342.3C340.7 344.7 348.2 346.7 356.0 348.7C363.8 350.6 372.2 352.4 380.0 353.9C387.8 355.5 395.3 356.7 403.0 357.8C410.7 358.9 418.2 359.8 426.0 360.7C433.8 361.6 440.0 362.1 450.0 363.2C460.0 364.3 473.8 365.3 486.0 367.4C498.2 369.6 516.8 374.5 523.0 375.9" stroke="#0ca020" stroke-width="1.1" fill="none" opacity="0.95"/>
<path d="M3.0 168.0C6.8 171.6 18.2 182.8 26.0 189.5C33.8 196.1 41.8 202.1 50.0 207.8C58.2 213.5 66.7 218.9 75.0 223.9C83.3 229.0 91.7 233.6 100.0 238.1C108.3 242.7 116.7 247.0 125.0 251.3C133.3 255.6 140.5 259.1 150.0 263.9C159.5 268.6 171.2 274.4 182.0 279.7C192.8 285.0 205.3 291.1 215.0 295.7C224.7 300.3 231.8 303.7 240.0 307.5C248.2 311.3 256.2 315.0 264.0 318.3C271.8 321.6 279.3 324.3 287.0 327.1C294.7 329.8 302.3 332.5 310.0 334.9C317.7 337.3 325.3 339.6 333.0 341.7C340.7 343.7 348.2 345.6 356.0 347.3C363.8 348.9 372.2 350.5 380.0 351.7C387.8 353.0 395.3 354.0 403.0 354.8C410.7 355.7 418.2 356.4 426.0 357.0C433.8 357.7 440.0 357.9 450.0 358.7C460.0 359.5 473.8 360.1 486.0 361.8C498.2 363.5 516.8 367.8 523.0 369.0" stroke="#0ca020" stroke-width="1.1" fill="none" opacity="0.95"/>
<path d="M3.0 149.8C6.8 153.6 18.2 165.5 26.0 172.6C33.8 179.8 41.8 186.2 50.0 192.4C58.2 198.6 66.7 204.5 75.0 210.0C83.3 215.6 91.7 220.7 100.0 225.7C108.3 230.8 116.7 235.6 125.0 240.3C133.3 245.1 140.5 249.1 150.0 254.4C159.5 259.7 171.2 266.2 182.0 272.1C192.8 278.1 205.3 284.9 215.0 290.1C224.7 295.4 231.8 299.2 240.0 303.4C248.2 307.7 256.2 312.0 264.0 315.7C271.8 319.3 279.3 322.2 287.0 325.2C294.7 328.2 302.3 331.1 310.0 333.8C317.7 336.5 325.3 339.0 333.0 341.3C340.7 343.7 348.2 345.7 356.0 347.7C363.8 349.6 372.2 351.4 380.0 353.0C387.8 354.5 395.3 355.7 403.0 356.8C410.7 358.0 418.2 358.9 426.0 359.8C433.8 360.7 440.0 361.2 450.0 362.3C460.0 363.4 473.8 364.4 486.0 366.5C498.2 368.7 516.8 373.6 523.0 375.0" stroke="#18b030" stroke-width="1.1" fill="none" opacity="0.95"/>
<path d="M3.0 156.4C6.8 160.2 18.2 171.9 26.0 178.9C33.8 185.9 41.8 192.2 50.0 198.3C58.2 204.4 66.7 210.1 75.0 215.5C83.3 220.9 91.7 225.8 100.0 230.8C108.3 235.7 116.7 240.3 125.0 245.0C133.3 249.6 140.5 253.5 150.0 258.7C159.5 263.8 171.2 270.1 182.0 275.9C192.8 281.6 205.3 288.3 215.0 293.3C224.7 298.4 231.8 302.1 240.0 306.2C248.2 310.3 256.2 314.6 264.0 318.1C271.8 321.6 279.3 324.3 287.0 327.2C294.7 330.1 302.3 332.9 310.0 335.5C317.7 338.0 325.3 340.5 333.0 342.7C340.7 344.8 348.2 346.8 356.0 348.6C363.8 350.4 372.2 352.1 380.0 353.5C387.8 354.9 395.3 356.0 403.0 357.0C410.7 358.0 418.2 358.8 426.0 359.6C433.8 360.4 440.0 360.8 450.0 361.7C460.0 362.7 473.8 363.5 486.0 365.4C498.2 367.3 516.8 372.0 523.0 373.3" stroke="#10a828" stroke-width="1.1" fill="none" opacity="0.95"/>
<path d="M3.0 151.0C6.8 154.9 18.2 166.8 26.0 173.9C33.8 181.0 41.8 187.4 50.0 193.6C58.2 199.8 66.7 205.6 75.0 211.2C83.3 216.7 91.7 221.8 100.0 226.8C108.3 231.9 116.7 236.7 125.0 241.4C133.3 246.2 140.5 250.2 150.0 255.5C159.5 260.8 171.2 267.2 182.0 273.2C192.8 279.1 205.3 285.9 215.0 291.1C224.7 296.3 231.8 300.1 240.0 304.4C248.2 308.6 256.2 313.0 264.0 316.6C271.8 320.1 279.3 322.8 287.0 325.7C294.7 328.6 302.3 331.4 310.0 334.0C317.7 336.6 325.3 339.0 333.0 341.2C340.7 343.4 348.2 345.4 356.0 347.2C363.8 349.0 372.2 350.7 380.0 352.1C387.8 353.5 395.3 354.6 403.0 355.6C410.7 356.6 418.2 357.4 426.0 358.2C433.8 359.0 440.0 359.4 450.0 360.3C460.0 361.3 473.8 362.1 486.0 364.0C498.2 366.0 516.8 370.6 523.0 371.9" stroke="#18b030" stroke-width="1.1" fill="none" opacity="0.95"/>
<path d="M3.0 167.8C6.8 171.4 18.2 182.7 26.0 189.3C33.8 196.0 41.8 202.0 50.0 207.7C58.2 213.5 66.7 218.8 75.0 223.9C83.3 228.9 91.7 233.5 100.0 238.1C108.3 242.7 116.7 247.0 125.0 251.3C133.3 255.6 140.5 259.2 150.0 263.9C159.5 268.7 171.2 274.5 182.0 279.8C192.8 285.1 205.3 291.2 215.0 295.9C224.7 300.5 231.8 303.9 240.0 307.7C248.2 311.5 256.2 315.2 264.0 318.6C271.8 321.9 279.3 324.8 287.0 327.8C294.7 330.7 302.3 333.4 310.0 336.0C317.7 338.6 325.3 341.0 333.0 343.2C340.7 345.4 348.2 347.4 356.0 349.2C363.8 351.0 372.2 352.7 380.0 354.1C387.8 355.5 395.3 356.6 403.0 357.7C410.7 358.7 418.2 359.5 426.0 360.3C433.8 361.0 440.0 361.4 450.0 362.4C460.0 363.4 473.8 364.2 486.0 366.1C498.2 368.1 516.8 372.7 523.0 374.0" stroke="#10a828" stroke-width="1.1" fill="none" opacity="0.95"/>
<path d="M3.0 155.3C6.8 158.9 18.2 170.5 26.0 177.3C33.8 184.2 41.8 190.3 50.0 196.3C58.2 202.2 66.7 207.7 75.0 213.0C83.3 218.2 91.7 223.1 100.0 227.8C108.3 232.6 116.7 237.1 125.0 241.6C133.3 246.1 140.5 249.8 150.0 254.8C159.5 259.8 171.2 265.8 182.0 271.4C192.8 277.0 205.3 283.4 215.0 288.2C224.7 293.1 231.8 296.7 240.0 300.6C248.2 304.6 256.2 308.5 264.0 312.1C271.8 315.6 279.3 318.7 287.0 321.9C294.7 325.0 302.3 328.0 310.0 330.8C317.7 333.6 325.3 336.2 333.0 338.6C340.7 341.0 348.2 343.2 356.0 345.2C363.8 347.3 372.2 349.2 380.0 350.8C387.8 352.5 395.3 353.8 403.0 355.0C410.7 356.2 418.2 357.2 426.0 358.2C433.8 359.2 440.0 359.8 450.0 361.0C460.0 362.3 473.8 363.5 486.0 365.7C498.2 368.0 516.8 373.2 523.0 374.7" stroke="#10a828" stroke-width="1.1" fill="none" opacity="0.95"/>
<path d="M3.0 170.2C6.8 173.7 18.2 184.8 26.0 191.3C33.8 197.8 41.8 203.6 50.0 209.2C58.2 214.8 66.7 220.0 75.0 224.9C83.3 229.8 91.7 234.2 100.0 238.6C108.3 243.0 116.7 247.2 125.0 251.3C133.3 255.5 140.5 258.9 150.0 263.5C159.5 268.0 171.2 273.6 182.0 278.7C192.8 283.8 205.3 289.7 215.0 294.2C224.7 298.6 231.8 301.9 240.0 305.5C248.2 309.1 256.2 312.7 264.0 315.9C271.8 319.1 279.3 322.0 287.0 324.8C294.7 327.7 302.3 330.4 310.0 332.9C317.7 335.4 325.3 337.7 333.0 339.9C340.7 342.0 348.2 343.9 356.0 345.6C363.8 347.4 372.2 349.0 380.0 350.3C387.8 351.7 395.3 352.7 403.0 353.6C410.7 354.6 418.2 355.3 426.0 356.0C433.8 356.7 440.0 357.0 450.0 357.9C460.0 358.8 473.8 359.5 486.0 361.3C498.2 363.1 516.8 367.6 523.0 368.9" stroke="#18b030" stroke-width="1.1" fill="none" opacity="0.95"/>
<path d="M22.0 56.0C28.3 62.7 47.0 85.8 60.0 96.0C73.0 106.2 85.0 107.7 100.0 117.5C115.0 127.3 135.0 142.9 150.0 155.0C165.0 167.1 175.8 178.8 190.0 190.0C204.2 201.2 222.5 213.8 235.0 222.0C247.5 230.2 254.2 234.8 265.0 239.0C275.8 243.2 286.2 244.7 300.0 247.0C313.8 249.3 331.3 249.5 348.0 253.0C364.7 256.5 381.3 263.7 400.0 268.0C418.7 272.3 439.5 275.7 460.0 279.0C480.5 282.3 512.5 286.5 523.0 288.0" stroke="#2a6a60" stroke-width="1" fill="none" opacity=".95"/>
<path d="M77.5 56.0C81.2 59.1 90.2 66.4 100.0 74.7C109.8 83.0 122.2 93.9 136.0 106.0C149.8 118.1 167.6 133.7 182.5 147.5C197.4 161.3 212.4 175.4 225.6 188.8C238.8 202.2 251.3 216.6 261.5 228.0C271.7 239.4 278.5 247.8 286.6 257.0C294.7 266.2 301.1 275.0 310.0 283.0C318.9 291.0 328.3 297.2 340.0 305.0C351.7 312.8 365.0 322.2 380.0 330.0C395.0 337.8 406.2 345.0 430.0 352.0C453.8 359.0 507.5 368.7 523.0 372.0" stroke="#2a6a60" stroke-width="1" fill="none" opacity=".95"/>
<circle cx="263.5" cy="308" r="46.500" fill="#fff" stroke="#3a9a5a" stroke-width="1"/>
<path d="M242 308.500H285M263.500 286V329" stroke="#5858a8" stroke-width="1.200" fill="none"/>
<path d="M289.0 268.0C294.2 269.3 308.8 273.3 320.0 276.0C331.2 278.7 343.7 281.2 356.0 284.0C368.3 286.8 382.5 290.0 394.0 293.0C405.5 296.0 415.7 298.8 425.0 302.0C434.3 305.2 442.8 308.7 450.0 312.0C457.2 315.3 463.3 318.7 468.0 322.0C472.7 325.3 475.8 329.0 478.0 332.0C480.2 335.0 480.8 337.3 481.0 340.0C481.2 342.7 480.5 345.3 479.0 348.0C477.5 350.7 474.8 353.8 472.0 356.0C469.2 358.2 465.7 359.8 462.0 361.0C458.3 362.2 455.3 362.9 450.0 363.0C444.7 363.1 437.8 362.7 430.0 361.5C422.2 360.3 411.3 357.8 403.0 356.0C394.7 354.2 387.8 352.8 380.0 351.0C372.2 349.2 364.3 347.5 356.0 345.0C347.7 342.5 337.8 339.2 330.0 336.0C322.2 332.8 316.5 329.3 309.0 326.0C301.5 322.7 292.5 319.0 285.0 316.0C277.5 313.0 267.5 309.3 264.0 308.0" stroke="#e040e0" stroke-width="2.400" fill="none" stroke-linecap="round"/>
<text x="521.5" y="462" text-anchor="end" font-family="Liberation Sans,sans-serif" font-weight="bold" font-size="12" fill="#606060">Zoom=4.8</text>
</svg>
<div class="abs chk" style="left:522px;top:56px;width:14px;height:408px"></div>
<div class="abs btn" style="left:522px;top:56px;width:14px;height:14px"></div>
<div class="abs btn" style="left:522px;top:450px;width:14px;height:14px"></div>
<svg class="abs" style="left:522px;top:56px" width="14" height="408"><path d="M3.5 8.5 L6.5 5.0 L9.5 8.5Z" fill="#000"/><path d="M3.5 399.0 L6.5 402.5 L9.5 399.0Z" fill="#000"/></svg>
<div class="abs btn" style="left:522px;top:312px;width:14px;height:77px"></div>
<div class="abs chk" style="left:3px;top:464px;width:519px;height:14px"></div>
<div class="abs btn" style="left:3px;top:464px;width:14px;height:14px"></div>
<div class="abs btn" style="left:508px;top:464px;width:14px;height:14px"></div>
<svg class="abs" style="left:3px;top:464px" width="519" height="14"><path d="M8.0 3.5 L4.5 6.5 L8.0 9.5Z" fill="#000"/><path d="M510.0 3.5 L513.5 6.5 L510.0 9.5Z" fill="#000"/></svg>
<div class="abs btn" style="left:195px;top:464px;width:101px;height:14px"></div>
<div class="abs" style="left:522px;top:464px;width:14px;height:14px;background:#d4d0c8"></div>
<div class="abs" style="left:3px;top:56px;width:1px;height:422px;background:rgba(64,64,64,.3)"></div>
<div class="abs" style="left:3px;top:55px;width:533px;height:1px;background:rgba(255,255,255,.45)"></div>
<div class="abs" style="left:540px;top:53px;width:546px;height:178px;background:#fff;border-top:3px solid #404040;border-left:3px solid #404040;border-right:1px solid #d4d0c8"></div><div class="abs" style="left:540px;top:231px;width:3px;height:6px;background:#404040"></div><div class="abs" style="left:543px;top:231px;width:545px;height:4px;background:linear-gradient(#e6e4df 0 1px,#f6f5f3 1px 3px,#dedbd4 3px 4px)"></div><div class="abs" style="left:543px;top:56px;width:542px;height:2px;background:#a8a6a0"></div><div class="abs" style="left:1086px;top:53px;width:2px;height:426px;background:#fff"></div>
<div class="abs" style="left:543px;top:58px;width:540px;height:159px;overflow:hidden;background:#fff">
<div class="hd" style="left:0px;width:59px">Division</div>
<div class="hd r" style="left:59px;width:106px">Track File</div>
<div class="hd" style="left:165px;width:74px">Start Time</div>
<div class="hd r" style="left:239px;width:51px">Seconds</div>
<div class="hd r" style="left:290px;width:54px">Distance</div>
<div class="hd r" style="left:344px;width:51px">Speed</div>
<div class="hd r" style="left:395px;width:58px">Min Speed</div>
<div class="hd" style="left:453px;width:51px">Max Sp...</div>
<div class="hd r" style="left:504px;width:34px">Run</div>
<div class="hd" style="left:538px;width:9px"></div>
<div class="row" style="left:2px;top:14px;width:538px;background:#0a246a;border:1px dotted #c8b890"></div>
<div class="row" style="top:13.60px;width:540px;color:#fff">
<span style="left:3px;width:56px">Alpha 500</span>
<span style="left:65px;width:100px">andrewd white_10...</span>
<span style="left:171px;width:68px">14:14:32.021</span>
<span class="r" style="left:239px;width:46px">32.998</span>
<span class="r" style="left:290px;width:49px">473.593</span>
<span class="r" style="left:344px;width:46px">27.898</span>
<span class="r" style="left:395px;width:53px">16.888</span>
<span class="r" style="left:453px;width:46px">35.187</span>
<span class="r" style="left:504px;width:29px">38</span>
</div>
<div class="row" style="top:25.45px;width:540px">
<span style="left:3px;width:56px">Alpha 500</span>
<span style="left:65px;width:100px">andrewd white_10...</span>
<span style="left:171px;width:68px">13:22:41.222</span>
<span class="r" style="left:239px;width:46px">25.998</span>
<span class="r" style="left:290px;width:49px">360.369</span>
<span class="r" style="left:344px;width:46px">26.944</span>
<span class="r" style="left:395px;width:53px">17.479</span>
<span class="r" style="left:453px;width:46px">30.098</span>
<span class="r" style="left:504px;width:29px">19</span>
</div>
<div class="row" style="top:37.30px;width:540px">
<span style="left:3px;width:56px">Alpha 500</span>
<span style="left:65px;width:100px">andrewd white_10...</span>
<span style="left:171px;width:68px">14:13:47.024</span>
<span class="r" style="left:239px;width:46px">35.998</span>
<span class="r" style="left:290px;width:49px">495.476</span>
<span class="r" style="left:344px;width:46px">26.755</span>
<span class="r" style="left:395px;width:53px">14.02</span>
<span class="r" style="left:453px;width:46px">33.394</span>
<span class="r" style="left:504px;width:29px">37</span>
</div>
<div class="row" style="top:49.15px;width:540px">
<span style="left:3px;width:56px">Alpha 500</span>
<span style="left:65px;width:100px">andrewd white_10...</span>
<span style="left:171px;width:68px">15:17:49.776</span>
<span class="r" style="left:239px;width:46px">10.000</span>
<span class="r" style="left:290px;width:49px">134.25</span>
<span class="r" style="left:344px;width:46px">26.096</span>
<span class="r" style="left:395px;width:53px">18.225</span>
<span class="r" style="left:453px;width:46px">31.968</span>
<span class="r" style="left:504px;width:29px">79</span>
</div>
<div class="row" style="top:61.00px;width:540px">
<span style="left:3px;width:56px">Alpha 500</span>
<span style="left:65px;width:100px">andrewd white_10...</span>
<span style="left:171px;width:68px">14:15:19.018</span>
<span class="r" style="left:239px;width:46px">28.998</span>
<span class="r" style="left:290px;width:49px">388.168</span>
<span class="r" style="left:344px;width:46px">26.02</span>
<span class="r" style="left:395px;width:53px">17.367</span>
<span class="r" style="left:453px;width:46px">32</span>
<span class="r" style="left:504px;width:29px">39</span>
</div>
<div class="row" style="top:72.85px;width:540px">
<span style="left:3px;width:56px">Alpha 500</span>
<span style="left:65px;width:100px">andrewd white_10...</span>
<span style="left:171px;width:68px">13:14:52.251</span>
<span class="r" style="left:239px;width:46px">35.998</span>
<span class="r" style="left:290px;width:49px">479.457</span>
<span class="r" style="left:344px;width:46px">25.89</span>
<span class="r" style="left:395px;width:53px">14.894</span>
<span class="r" style="left:453px;width:46px">30.006</span>
<span class="r" style="left:504px;width:29px">16</span>
</div>
<div class="row" style="top:84.70px;width:540px">
<span style="left:3px;width:56px">Alpha 500</span>
<span style="left:65px;width:100px">andrewd white_10...</span>
<span style="left:171px;width:68px">14:31:32.956</span>
<span class="r" style="left:239px;width:46px">36.997</span>
<span class="r" style="left:290px;width:49px">487.29</span>
<span class="r" style="left:344px;width:46px">25.603</span>
<span class="r" style="left:395px;width:53px">14.625</span>
<span class="r" style="left:453px;width:46px">33.807</span>
<span class="r" style="left:504px;width:29px">48</span>
</div>
<div class="row" style="top:96.55px;width:540px">
<span style="left:3px;width:56px">Alpha 500</span>
<span style="left:65px;width:100px">andrewd white_10...</span>
<span style="left:171px;width:68px">14:44:32.905</span>
<span class="r" style="left:239px;width:46px">37.998</span>
<span class="r" style="left:290px;width:49px">499.891</span>
<span class="r" style="left:344px;width:46px">25.573</span>
<span class="r" style="left:395px;width:53px">15.509</span>
<span class="r" style="left:453px;width:46px">32.581</span>
<span class="r" style="left:504px;width:29px">57</span>
</div>
<div class="row" style="top:108.40px;width:540px">
<span style="left:3px;width:56px">Alpha 500</span>
<span style="left:65px;width:100px">andrewd white_10...</span>
<span style="left:171px;width:68px">14:46:59.896</span>
<span class="r" style="left:239px;width:46px">36.997</span>
<span class="r" style="left:290px;width:49px">483.836</span>
<span class="r" style="left:344px;width:46px">25.421</span>
<span class="r" style="left:395px;width:53px">14.776</span>
<span class="r" style="left:453px;width:46px">32.401</span>
<span class="r" style="left:504px;width:29px">59</span>
</div>
<div class="row" style="top:120.25px;width:540px">
<span style="left:3px;width:56px">Alpha 500</span>
<span style="left:65px;width:100px">andrewd white_10...</span>
<span style="left:171px;width:68px">15:22:07.760</span>
<span class="r" style="left:239px;width:46px">37.997</span>
<span class="r" style="left:290px;width:49px">491.13</span>
<span class="r" style="left:344px;width:46px">25.125</span>
<span class="r" style="left:395px;width:53px">16.291</span>
<span class="r" style="left:453px;width:46px">31.941</span>
<span class="r" style="left:504px;width:29px">82</span>
</div>
<div class="row" style="top:132.10px;width:540px">
<span style="left:3px;width:56px">Alpha 500</span>
<span style="left:65px;width:100px">andrewd white_10...</span>
<span style="left:171px;width:68px">14:32:48.951</span>
<span class="r" style="left:239px;width:46px">36.997</span>
<span class="r" style="left:290px;width:49px">477.767</span>
<span class="r" style="left:344px;width:46px">25.102</span>
<span class="r" style="left:395px;width:53px">15.128</span>
<span class="r" style="left:453px;width:46px">33.42</span>
<span class="r" style="left:504px;width:29px">49</span>
</div>
<div class="row" style="top:143.95px;width:540px">
<span style="left:3px;width:56px">Alpha 500</span>
<span style="left:65px;width:100px">andrewd white_10...</span>
<span style="left:171px;width:68px">14:43:15.910</span>
<span class="r" style="left:239px;width:46px">38.997</span>
<span class="r" style="left:290px;width:49px">498.951</span>
<span class="r" style="left:344px;width:46px">24.871</span>
<span class="r" style="left:395px;width:53px">13.568</span>
<span class="r" style="left:453px;width:46px">33.553</span>
<span class="r" style="left:504px;width:29px">56</span>
</div>
</div>
<div class="abs chk" style="left:543px;top:217px;width:540px;height:14px"></div>
<div class="abs btn" style="left:543px;top:217px;width:13px;height:14px"></div>
<div class="abs btn" style="left:1070px;top:217px;width:13px;height:14px"></div>
<svg class="abs" style="left:543px;top:217px" width="540" height="14"><path d="M7.5 3.5 L4.0 6.5 L7.5 9.5Z" fill="#000"/><path d="M531.5 3.5 L535.0 6.5 L531.5 9.5Z" fill="#000"/></svg>
<div class="abs btn" style="left:557px;top:217px;width:431px;height:14px"></div>
<div class="abs" style="left:540px;top:235px;width:546px;height:241px;background:#fff;border-top:2px solid #404040;border-left:3px solid #404040;border-right:1px solid #d4d0c8"></div><div class="abs" style="left:540px;top:476px;width:548px;height:2px;background:#fff"></div>
<div class="abs" style="left:543px;top:237px;width:526px;height:239px;overflow:hidden;background:#fff;color:#fff"><div class="abs" style="left:2px;top:13.5px;width:524px;height:226px;background:#0a246a"></div>
<div class="abs" style="left:0;top:0;width:526px;height:14px;background:#d4d0c8;color:#000">
<div class="hd" style="left:0px;width:33px;height:14px;line-height:13px">Track</div>
<div class="hd" style="left:33px;width:68px;height:14px;line-height:13px">Time</div>
<div class="hd" style="left:101px;width:43px;height:14px;line-height:13px">Seco...</div>
<div class="hd r" style="left:144px;width:51px;height:14px;line-height:13px">Speed</div>
<div class="hd" style="left:195px;width:34px;height:14px;line-height:13px">HDOP</div>
<div class="hd r" style="left:229px;width:51px;height:14px;line-height:13px">Invalid</div>
<div class="hd r" style="left:280px;width:34px;height:14px;line-height:13px">Sats</div>
<div class="hd r" style="left:314px;width:51px;height:14px;line-height:13px">Doppler</div>
<div class="hd r" style="left:365px;width:34px;height:14px;line-height:13px">Run</div>
<div class="hd" style="left:399px;width:128px;height:14px;line-height:13px"></div>
</div>
<div class="row" style="top:13.5px;width:526px">
<span style="left:3px;width:31px">3476</span>
<span style="left:38px;width:64px">14:14:32.021</span>
<span class="r" style="left:101px;width:38px">1.000</span>
<span class="r" style="left:144px;width:46px">29.533</span>
<span class="r" style="left:195px;width:30px">1.2</span>
<span class="r" style="left:280px;width:29px">6</span>
<span class="r" style="left:314px;width:46px">29.488</span>
<span class="r" style="left:365px;width:29px">38</span>
</div>
<div class="row" style="top:25.4px;width:526px">
<span style="left:3px;width:31px">3477</span>
<span style="left:38px;width:64px">14:14:33.021</span>
<span class="r" style="left:101px;width:38px">1.000</span>
<span class="r" style="left:144px;width:46px">30.055</span>
<span class="r" style="left:195px;width:30px">1.2</span>
<span class="r" style="left:280px;width:29px">7</span>
<span class="r" style="left:314px;width:46px">30.188</span>
<span class="r" style="left:365px;width:29px">38</span>
</div>
<div class="row" style="top:37.3px;width:526px">
<span style="left:3px;width:31px">3478</span>
<span style="left:38px;width:64px">14:14:34.021</span>
<span class="r" style="left:101px;width:38px">1.000</span>
<span class="r" style="left:144px;width:46px">30.575</span>
<span class="r" style="left:195px;width:30px">1</span>
<span class="r" style="left:280px;width:29px">8</span>
<span class="r" style="left:314px;width:46px">30.479</span>
<span class="r" style="left:365px;width:29px">38</span>
</div>
<div class="row" style="top:49.2px;width:526px">
<span style="left:3px;width:31px">3479</span>
<span style="left:38px;width:64px">14:14:35.021</span>
<span class="r" style="left:101px;width:38px">1.000</span>
<span class="r" style="left:144px;width:46px">31.502</span>
<span class="r" style="left:195px;width:30px">1</span>
<span class="r" style="left:280px;width:29px">8</span>
<span class="r" style="left:314px;width:46px">31.685</span>
<span class="r" style="left:365px;width:29px">38</span>
</div>
<div class="row" style="top:61.1px;width:526px">
<span style="left:3px;width:31px">3480</span>
<span style="left:38px;width:64px">14:14:36.021</span>
<span class="r" style="left:101px;width:38px">1.000</span>
<span class="r" style="left:144px;width:46px">32.58</span>
<span class="r" style="left:195px;width:30px">1</span>
<span class="r" style="left:280px;width:29px">8</span>
<span class="r" style="left:314px;width:46px">32.326</span>
<span class="r" style="left:365px;width:29px">38</span>
</div>
<div class="row" style="top:73.0px;width:526px">
<span style="left:3px;width:31px">3481</span>
<span style="left:38px;width:64px">14:14:37.021</span>
<span class="r" style="left:101px;width:38px">1.000</span>
<span class="r" style="left:144px;width:46px">33.264</span>
<span class="r" style="left:195px;width:30px">1</span>
<span class="r" style="left:280px;width:29px">8</span>
<span class="r" style="left:314px;width:46px">32.987</span>
<span class="r" style="left:365px;width:29px">38</span>
</div>
<div class="row" style="top:84.9px;width:526px">
<span style="left:3px;width:31px">3482</span>
<span style="left:38px;width:64px">14:14:38.021</span>
<span class="r" style="left:101px;width:38px">1.000</span>
<span class="r" style="left:144px;width:46px">33.912</span>
<span class="r" style="left:195px;width:30px">1.2</span>
<span class="r" style="left:280px;width:29px">7</span>
<span class="r" style="left:314px;width:46px">33.395</span>
<span class="r" style="left:365px;width:29px">38</span>
</div>
<div class="row" style="top:96.8px;width:526px">
<span style="left:3px;width:31px">3483</span>
<span style="left:38px;width:64px">14:14:39.021</span>
<span class="r" style="left:101px;width:38px">1.000</span>
<span class="r" style="left:144px;width:46px">34.013</span>
<span class="r" style="left:195px;width:30px">1.2</span>
<span class="r" style="left:280px;width:29px">7</span>
<span class="r" style="left:314px;width:46px">33.492</span>
<span class="r" style="left:365px;width:29px">38</span>
</div>
<div class="row" style="top:108.7px;width:526px">
<span style="left:3px;width:31px">3484</span>
<span style="left:38px;width:64px">14:14:40.021</span>
<span class="r" style="left:101px;width:38px">1.000</span>
<span class="r" style="left:144px;width:46px">34.089</span>
<span class="r" style="left:195px;width:30px">1.2</span>
<span class="r" style="left:280px;width:29px">7</span>
<span class="r" style="left:314px;width:46px">33.765</span>
<span class="r" style="left:365px;width:29px">38</span>
</div>
<div class="row" style="top:120.6px;width:526px">
<span style="left:3px;width:31px">3485</span>
<span style="left:38px;width:64px">14:14:41.021</span>
<span class="r" style="left:101px;width:38px">1.000</span>
<span class="r" style="left:144px;width:46px">34.543</span>
<span class="r" style="left:195px;width:30px">1</span>
<span class="r" style="left:280px;width:29px">8</span>
<span class="r" style="left:314px;width:46px">34.581</span>
<span class="r" style="left:365px;width:29px">38</span>
</div>
<div class="row" style="top:132.5px;width:526px">
<span style="left:3px;width:31px">3486</span>
<span style="left:38px;width:64px">14:14:42.021</span>
<span class="r" style="left:101px;width:38px">1.000</span>
<span class="r" style="left:144px;width:46px">35.004</span>
<span class="r" style="left:195px;width:30px">1</span>
<span class="r" style="left:280px;width:29px">8</span>
<span class="r" style="left:314px;width:46px">34.814</span>
<span class="r" style="left:365px;width:29px">38</span>
</div>
<div class="row" style="top:144.4px;width:526px">
<span style="left:3px;width:31px">3487</span>
<span style="left:38px;width:64px">14:14:43.021</span>
<span class="r" style="left:101px;width:38px">1.000</span>
<span class="r" style="left:144px;width:46px">35.187</span>
<span class="r" style="left:195px;width:30px">1</span>
<span class="r" style="left:280px;width:29px">8</span>
<span class="r" style="left:314px;width:46px">35.164</span>
<span class="r" style="left:365px;width:29px">38</span>
</div>
<div class="row" style="top:156.3px;width:526px">
<span style="left:3px;width:31px">3488</span>
<span style="left:38px;width:64px">14:14:44.020</span>
<span class="r" style="left:101px;width:38px">0.999</span>
<span class="r" style="left:144px;width:46px">34.91</span>
<span class="r" style="left:195px;width:30px">1</span>
<span class="r" style="left:280px;width:29px">8</span>
<span class="r" style="left:314px;width:46px">34.464</span>
<span class="r" style="left:365px;width:29px">38</span>
</div>
<div class="row" style="top:168.2px;width:526px">
<span style="left:3px;width:31px">3489</span>
<span style="left:38px;width:64px">14:14:45.020</span>
<span class="r" style="left:101px;width:38px">1.000</span>
<span class="r" style="left:144px;width:46px">33.083</span>
<span class="r" style="left:195px;width:30px">1</span>
<span class="r" style="left:280px;width:29px">8</span>
<span class="r" style="left:314px;width:46px">32.326</span>
<span class="r" style="left:365px;width:29px">38</span>
</div>
<div class="row" style="top:180.1px;width:526px">
<span style="left:3px;width:31px">3490</span>
<span style="left:38px;width:64px">14:14:46.020</span>
<span class="r" style="left:101px;width:38px">1.000</span>
<span class="r" style="left:144px;width:46px">28.278</span>
<span class="r" style="left:195px;width:30px">1</span>
<span class="r" style="left:280px;width:29px">8</span>
<span class="r" style="left:314px;width:46px">25.737</span>
<span class="r" style="left:365px;width:29px">38</span>
</div>
<div class="row" style="top:192.0px;width:526px">
<span style="left:3px;width:31px">3491</span>
<span style="left:38px;width:64px">14:14:47.020</span>
<span class="r" style="left:101px;width:38px">1.000</span>
<span class="r" style="left:144px;width:46px">21.439</span>
<span class="r" style="left:195px;width:30px">1</span>
<span class="r" style="left:280px;width:29px">8</span>
<span class="r" style="left:314px;width:46px">18.914</span>
<span class="r" style="left:365px;width:29px">39</span>
</div>
<div class="row" style="top:203.9px;width:526px">
<span style="left:3px;width:31px">3492</span>
<span style="left:38px;width:64px">14:14:48.020</span>
<span class="r" style="left:101px;width:38px">1.000</span>
<span class="r" style="left:144px;width:46px">17.518</span>
<span class="r" style="left:195px;width:30px">1</span>
<span class="r" style="left:280px;width:29px">8</span>
<span class="r" style="left:314px;width:46px">15.59</span>
<span class="r" style="left:365px;width:29px">39</span>
</div>
<div class="row" style="top:215.8px;width:526px">
<span style="left:3px;width:31px">3493</span>
<span style="left:38px;width:64px">14:14:49.020</span>
<span class="r" style="left:101px;width:38px">1.000</span>
<span class="r" style="left:144px;width:46px">16.888</span>
<span class="r" style="left:195px;width:30px">1.2</span>
<span class="r" style="left:280px;width:29px">7</span>
<span class="r" style="left:314px;width:46px">16.173</span>
<span class="r" style="left:365px;width:29px">39</span>
</div>
<div class="row" style="top:227.7px;width:526px">
<span style="left:3px;width:31px">3494</span>
<span style="left:38px;width:64px">14:14:50.020</span>
<span class="r" style="left:101px;width:38px">1.000</span>
<span class="r" style="left:144px;width:46px">18.411</span>
<span class="r" style="left:195px;width:30px">1.2</span>
<span class="r" style="left:280px;width:29px">7</span>
<span class="r" style="left:314px;width:46px">17.553</span>
<span class="r" style="left:365px;width:29px">39</span>
</div>
</div>
<div class="abs chk" style="left:1069px;top:237px;width:14px;height:239px"></div>
<div class="abs btn" style="left:1069px;top:237px;width:14px;height:13px"></div>
<div class="abs btn" style="left:1069px;top:463px;width:14px;height:13px"></div>
<svg class="abs" style="left:1069px;top:237px" width="14" height="239"><path d="M3.5 8.0 L6.5 4.5 L9.5 8.0Z" fill="#000"/><path d="M3.5 230.5 L6.5 234.0 L9.5 230.5Z" fill="#000"/></svg>
<div class="abs btn" style="left:1069px;top:327px;width:14px;height:7px"></div>

<div class="abs" style="left:0;top:484px;width:1088px;height:154px;background:#fff;border-top:2px solid #404040;border-left:2px solid #404040"></div>
<svg class="abs" style="left:2px;top:486px" width="1086" height="138" viewBox="2 486 1086 138">
<rect x="451.500" y="485" width="184.500" height="125" fill="#fdb0fd"/>
<path d="M451.500 485V610" stroke="#e080e0" stroke-width="1"/>
<path d="M2 488.5H451M636 488.5H1088M2 503.5H451M636 503.5H1088M2 518.5H451M636 518.5H1088M2 533.5H451M636 533.5H1088M2 548.5H451M636 548.5H1088M2 564.5H451M636 564.5H1088M2 579.5H451M636 579.5H1088M2 594.5H451M636 594.5H1088" stroke="#d4d4d4" stroke-width="1" fill="none"/>
<path d="M452 488.5H636M452 503.5H636M452 518.5H636M452 533.5H636M452 548.5H636M452 564.5H636M452 579.5H636M452 594.5H636" stroke="#f0a8f0" stroke-width="1" fill="none"/>
<text x="2" y="492.3" font-family="Liberation Sans,sans-serif" font-weight="bold" font-size="12" fill="#c8c8c8">40</text>
<text x="2" y="507.5" font-family="Liberation Sans,sans-serif" font-weight="bold" font-size="12" fill="#c8c8c8">35</text>
<text x="2" y="522.7" font-family="Liberation Sans,sans-serif" font-weight="bold" font-size="12" fill="#c8c8c8">30</text>
<text x="2" y="537.9" font-family="Liberation Sans,sans-serif" font-weight="bold" font-size="12" fill="#c8c8c8">25</text>
<text x="2" y="553.1" font-family="Liberation Sans,sans-serif" font-weight="bold" font-size="12" fill="#c8c8c8">20</text>
<text x="2" y="568.3" font-family="Liberation Sans,sans-serif" font-weight="bold" font-size="12" fill="#c8c8c8">15</text>
<text x="2" y="583.5" font-family="Liberation Sans,sans-serif" font-weight="bold" font-size="12" fill="#c8c8c8">10</text>
<text x="2" y="598.7" font-family="Liberation Sans,sans-serif" font-weight="bold" font-size="12" fill="#c8c8c8">5</text>
<path d="M270.5 610V623" stroke="#d0d0d0" stroke-width="1"/>
<text x="272" y="622.3" font-family="Liberation Sans,sans-serif" font-weight="bold" font-size="12" fill="#c8c8c8">14:14</text>
<path d="M609.5 610V623" stroke="#d0d0d0" stroke-width="1"/>
<text x="611" y="622.3" font-family="Liberation Sans,sans-serif" font-weight="bold" font-size="12" fill="#c8c8c8">14:15</text>
<path d="M948.5 610V623" stroke="#d0d0d0" stroke-width="1"/>
<text x="950" y="622.3" font-family="Liberation Sans,sans-serif" font-weight="bold" font-size="12" fill="#c8c8c8">14:16</text>
<path d="M2 556.5 L17 556.5 L22 549.3 L29 556.5 L34 549.3 L40 556.5 L51 556.5 L56 549.3 L67 549.3 L72 556.5 L79 556.5 L85 549.3 L91 556.5 L101 556.5 L107 549.3 L114 549.3 L119 556.5 L124 549.3 L130 556.5 L142 556.5 L146 549.3 L192 549.3 L197.5 556.5 L202.5 549.3 L249 549.3 L254 556.5 L260 549.3 L265 556.5 L271 549.3 L272 549.3 L277 556.5 L287 556.5 L292 549.3 L304.5 549.3 L309.5 556.5 L354.5 556.5 L359.5 549.3 L366 556.5 L371 549.3 L378 549.3 L383 556.5 L389.5 556.5 L394.5 549.3 L406 549.3 L411.5 556.5 L418 549.3 L423 556.5 L438 556.5 L444.5 564 L451.5 564 L461 549.3 L479.5 549.3 L486 556.5 L496 556.5 L501 549.3 L541 549.3 L547 556.5 L550 556.5 L556.5 549.3 L560 549.3 L565 556.5 L586.5 556.5 L592 549.3 L598 556.5 L609.5 556.5 L615 549.3 L620 556.5 L631.5 556.5 L637 549.3 L643 556.5 L648 549.3 L654 556.5 L698 556.5 L704 549.3 L709 549.3 L716 556.5 L723 549.3 L734 549.3 L739 556.5 L744 549.3 L768 549.3 L773 556.5 L779 549.3 L784 556.5 L791.5 556.5 L796.5 549.3 L822 549.3 L828.5 556.5 L833.5 556.5 L840 564 L845 556.5 L851 564 L857 556.5 L862 556.5 L870 564 L881 564 L885 556.5 L891 556.5 L897 564 L902 556.5 L908.5 549.3 L913.5 556.5 L918.5 549.3 L925 556.5 L931 564 L936 556.5 L942 564 L947 556.5 L953.5 564 L960 549.3 L965 549.3 L971 564 L976 556.5 L982 564 L992 549.3 L1053.5 549.3 L1060 556.5 L1088 556.5" stroke="#f0a850" stroke-width="1" fill="none"/>
<path d="M2 547 L15 550.5 L27.5 551 L37.5 549.5 L46 550 L57.5 548 L75 544.5 L96 540.5 L102.5 540.5 L112.5 542 L120 542 L135 540 L147.5 536.5 L165 533 L181 529.5 L192.5 524.5 L200 519.5 L210 515 L220 510.5 L227.5 510 L240 508 L250 509.5 L260 512 L272 517 L276 520 L279.5 527.5 L283 533 L289.5 539 L294 544 L296 555 L299 567 L304.5 562.5 L309.5 555 L317 548 L327 541 L337 534 L344.5 531 L352 531.5 L362 533 L372 535 L377 534 L384.5 531 L397 528 L407 528 L413 529 L422 526 L434.5 522 L444.5 520 L451.5 520 L462 517.5 L472 511 L483 507 L492 506 L502 504.5 L512 502.5 L518 503 L523 507.5 L528 519 L533 535 L538 549 L542 556 L544 556.5 L547 558.5 L554 553 L561.5 547 L569 542 L576.5 535.5 L584 531 L594 527.5 L604 526 L614 525 L626.5 525.5 L636.5 527 L643 529.5 L651.5 529 L661.5 531 L674 535.5 L686.5 537 L696.5 537 L706.5 534.5 L714 531 L721.5 524.5 L731.5 520 L744 517 L754 514 L761.5 512.5 L769 513 L776.5 515.5 L783 519.5 L788 530 L793 545 L798 554 L803 557.5 L806.5 557 L811.5 551 L816 548 L826 540 L838.5 533 L846 533 L856 535.5 L866 533 L878.5 534.5 L891 532 L898.5 532.5 L911 535.5 L923.5 537.5 L933.5 535 L948.5 528 L961 519 L976 511 L988.5 506 L996 506 L1003.5 507 L1013.5 500.5 L1021 497.5 L1033.5 496.5 L1046 497 L1056 500 L1066 507.5 L1076 521 L1086 534 L1089 538" stroke="#2c2c2c" stroke-width="1" fill="none" stroke-linejoin="round"/>
<text x="1072.5" y="522.7" font-family="Liberation Sans,sans-serif" font-weight="bold" font-size="12" fill="#eaa040">12</text>
<text x="1072.5" y="537.9" font-family="Liberation Sans,sans-serif" font-weight="bold" font-size="12" fill="#eaa040">10</text>
<text x="1072.5" y="553.1" font-family="Liberation Sans,sans-serif" font-weight="bold" font-size="12" fill="#eaa040">8</text>
<text x="1072.5" y="568.3" font-family="Liberation Sans,sans-serif" font-weight="bold" font-size="12" fill="#eaa040">6</text>
<text x="1072.5" y="583.5" font-family="Liberation Sans,sans-serif" font-weight="bold" font-size="12" fill="#eaa040">4</text>
<text x="1072.5" y="598.7" font-family="Liberation Sans,sans-serif" font-weight="bold" font-size="12" fill="#eaa040">2</text>
<text x="1086.5" y="622.3" text-anchor="end" font-family="Liberation Sans,sans-serif" font-weight="bold" font-size="12" fill="#606060">Zoom=30.3</text>
</svg>
<div class="abs chk" style="left:2px;top:624px;width:1086px;height:14px"></div>
<div class="abs btn" style="left:2px;top:624px;width:14px;height:14px"></div>
<div class="abs btn" style="left:1074px;top:624px;width:14px;height:14px"></div>
<svg class="abs" style="left:2px;top:624px" width="1086" height="14"><path d="M8.0 3.5 L4.5 6.5 L8.0 9.5Z" fill="#000"/><path d="M1077.0 3.5 L1080.5 6.5 L1077.0 9.5Z" fill="#000"/></svg>
<div class="abs btn" style="left:402px;top:624px;width:22px;height:14px"></div>
<div class="abs" style="left:2px;top:641px;font-size:9.5px;line-height:13px">Ready</div>
<div class="abs sb" style="left:792px;width:31px">29.533</div>
<div class="abs sb" style="left:824px;width:31px">AVG</div>
<div class="abs sb" style="left:857px;width:47px">21639.85</div>
<div class="abs sb" style="left:906px;width:57px">-38.8529719</div>
<div class="abs sb" style="left:965px;width:64px">+146.1659969</div>
<div class="abs sb" style="left:1031px;width:59px">04:14:32.021</div>
<div class="abs" style="left:0;top:655px;width:1088px;height:25px;background:#d4d0c8;border-top:1px solid #f2f0ec"></div>
<div class="abs" style="left:0;top:654px;width:1088px;height:1px;background:#d4d0c8"></div>
<div class="abs btn" style="left:2px;top:658px;width:44px;height:18px"></div>
<svg class="abs" style="left:5px;top:660px" width="14" height="14" viewBox="0 0 14 14"><path d="M1 3 Q3.500 1.500 6 3 V7 Q3.500 5.500 1 7Z" fill="#e04020"/><path d="M7 3 Q9.500 4.500 12.500 3 V7 Q9.500 8.500 7 7Z" fill="#30a030"/><path d="M1 8 Q3.500 6.500 6 8 V12 Q3.500 10.500 1 12Z" fill="#3060d0"/><path d="M7 8 Q9.500 9.500 12.500 8 V12 Q9.500 13.500 7 12Z" fill="#e8c020"/></svg>
<div class="abs tb" style="left:19px;font-weight:bold;font-size:10.500px;top:659px">Start</div>
<div class="abs" style="left:51px;top:658px;width:2px;height:19px;border-left:1px solid #808080;border-right:1px solid #fff"></div>
<div class="abs btn" style="left:57px;top:658px;width:136px;height:18px"></div>
<svg class="abs" style="left:61px;top:660px" width="14" height="14" viewBox="0 0 14 14"><rect x="1" y="4" width="11" height="8" fill="#e8f0ff" stroke="#4060a0"/><path d="M1 4 L6.500 9 L12 4" fill="none" stroke="#4060a0"/><circle cx="8" cy="4.500" r="3.500" fill="#50a0e0" stroke="#2060b0" stroke-width=".8"/><path d="M5 4 Q8 2 11 5" stroke="#fff" fill="none"/></svg>
<div class="abs tb" style="left:78px;width:112px">Inbox - Outlook Express</div>
<div class="abs btn" style="left:196px;top:658px;width:136px;height:18px"></div>
<svg class="abs" style="left:200px;top:660px" width="14" height="14" viewBox="0 0 14 14"><circle cx="7" cy="7" r="6.300" fill="#e87010"/><circle cx="6.500" cy="6.500" r="3.600" fill="#3858b8"/><path d="M1.500 5 Q1 11 6 12.800 Q11 13.500 12.800 9 Q10 11.500 7 10.500 Q3.500 9.500 4 6 Z" fill="#f0a020"/><path d="M2 4 Q4 1 7 1 L5.500 3 Q3 4 2.500 6Z" fill="#c04808"/></svg>
<div class="abs tb" style="left:217px;width:112px">Seabreeze Forums! - Wi...</div>
<div class="abs chk" style="left:335px;top:658px;width:136px;height:18px;border:1px solid;border-color:#404040 #fff #fff #404040;box-shadow:inset 1px 1px 0 #808080"></div>
<svg class="abs" style="left:340px;top:661px" width="14" height="14" viewBox="0 0 15 15"><rect width="15" height="15" fill="#101010"/><rect width="3" height="15" fill="#e02020"/><rect x="3" y="1" width="4" height="4" fill="#fff"/><rect x="11" y="1" width="4" height="4" fill="#fff"/><rect x="7" y="5" width="4" height="4" fill="#fff"/><rect x="3" y="9" width="4" height="4" fill="#fff"/><rect x="11" y="9" width="4" height="4" fill="#fff"/></svg>
<div class="abs tb" style="left:356px;top:659px;width:112px;font-weight:bold">Alpha 500</div>
<div class="abs btn" style="left:473px;top:658px;width:136px;height:18px"></div>
<svg class="abs" style="left:478px;top:660px" width="14" height="14" viewBox="0 0 14 14"><circle cx="7" cy="7" r="6.300" fill="#e87010"/><circle cx="6.500" cy="6.500" r="3.600" fill="#3858b8"/><path d="M1.500 5 Q1 11 6 12.800 Q11 13.500 12.800 9 Q10 11.500 7 10.500 Q3.500 9.500 4 6 Z" fill="#f0a020"/><path d="M2 4 Q4 1 7 1 L5.500 3 Q3 4 2.500 6Z" fill="#c04808"/></svg>
<div class="abs tb" style="left:494px;width:113px">GPS-Speedsurfing.com ::...</div>
<div class="abs" style="left:697px;top:658px;width:2px;height:19px;border-left:1px solid #808080;border-right:1px solid #fff"></div>
<svg class="abs" style="left:704px;top:660px" width="16" height="16" viewBox="0 0 16 16"><path d="M2.500 2.500 H12.500 V11.500 H11 V14 L8.500 11.500 H2.500Z" fill="#ffffe8" stroke="#202020" stroke-width="1.300"/><text x="7.500" y="10" text-anchor="middle" font-family="Liberation Sans,sans-serif" font-weight="bold" font-size="9" fill="#101010">?</text></svg>
<div class="abs" style="left:721px;top:658px;width:2px;height:19px;border-left:1px solid #808080;border-right:1px solid #fff"></div>
<svg class="abs" style="left:727px;top:659px" width="10" height="16" viewBox="0 0 10 16"><rect x="3.500" y="1.500" width="4" height="3" fill="#fff" stroke="#303030" stroke-width=".9"/><rect x="1.500" y="3.500" width="4" height="3" fill="#fff" stroke="#303030" stroke-width=".9"/><path d="M2 11 H7 L4.500 14Z" fill="#202020"/></svg>
<div class="abs" style="left:747px;top:661px;width:42px;height:13px;background:#58e048;border:1px solid;border-color:#b0ffa0 #208020 #208020 #b0ffa0;font-weight:bold;font-size:10.500px;line-height:11px;text-align:center;color:#102010">100%</div>
<div class="abs" style="left:789px;top:664px;width:2px;height:8px;background:#808080"></div>
<svg class="abs" style="left:798px;top:662px" width="15" height="13" viewBox="0 0 15 13"><path d="M0 6.500 H4" stroke="#101010" stroke-width="2.200"/><path d="M4 2 H9 Q11 2 11 4 V9 Q11 11 9 11 H4 Q3 11 3 10 V3 Q3 2 4 2Z" fill="#101010"/><path d="M11 4 H14.500 M11 9 H14.500" stroke="#101010" stroke-width="2"/></svg>
<div class="abs" style="left:819px;top:658px;width:269px;height:20px;border:1px solid;border-color:#808080 #fff #fff #808080"></div>
<svg class="abs" style="left:0;top:0" width="1088" height="680" viewBox="0 0 1088 680"><g transform="translate(822,661)"><rect x="1" y="3" width="7" height="6" fill="#70c0f0" stroke="#5080b0" stroke-width=".8"/><rect x="2" y="10" width="6" height="1.500" fill="#9090a0"/><rect x="1" y="12" width="8" height="1.200" fill="#7070c0"/><path d="M9.500 6.500 Q11 4.500 9.500 2.500 M11.300 7.500 Q13.500 4.500 11.300 1.500" fill="none" stroke="#40b040" stroke-width="1.200"/></g><g transform="translate(838,661)"><ellipse cx="6.500" cy="7" rx="7" ry="4.800" transform="rotate(35 6.500 7)" fill="#98d858"/><ellipse cx="9" cy="9.500" rx="4.200" ry="3.200" transform="rotate(35 9 9.500)" fill="#808830"/><path d="M7.500 9 Q9 11.500 11.500 10.500" fill="none" stroke="#f0e8c0" stroke-width="1.300"/></g><g transform="translate(853,661)"><path d="M8 1.500 Q1.500 2.500 2 8 Q2.500 12.500 8 13" fill="none" stroke="#0e5f70" stroke-width="2.600"/><path d="M8.500 4.500 Q5 5.500 5.500 8 Q6 10.500 9 10.500" fill="none" stroke="#1a8090" stroke-width="1.800"/><circle cx="11" cy="3" r="1.600" fill="#d04040"/><circle cx="11.500" cy="7.500" r="1.500" fill="#3050c0"/><circle cx="10.500" cy="11.500" r="1.400" fill="#304080"/></g><g transform="translate(868,661)"><rect x="3" y="2" width="10.500" height="9" fill="#fff" stroke="#203080" stroke-width=".9"/><rect x="3" y="2" width="10.500" height="2.500" fill="#2038a8"/><path d="M8 7 H12 M8 9 H12" stroke="#9098c0" stroke-width=".8"/><rect x="1" y="8" width="6" height="5" rx="1" fill="#181818"/><path d="M2.300 8 V6.500 Q4 4.300 5.700 6.500 V8" fill="none" stroke="#181818" stroke-width="1.200"/><circle cx="4" cy="10.500" r="1" fill="#d0c8b0"/></g><g transform="translate(883,661)"><rect x="1" y="5" width="7" height="8" fill="#30b8e0"/><rect x="6" y="1" width="8" height="11" fill="#3070d8"/><rect x="8" y="6" width="5" height="6" fill="#60c8f0"/><path d="M2 3 Q5 0 8 3 Q7 6 4 6 Q2 5 2 3Z" fill="#e03030"/><path d="M8 8 L12 4" stroke="#1840a0" stroke-width="1.500"/></g><g transform="translate(899,661)"><path d="M4 .5 H9 L12 4 V10 L9 13.500 H4 L1 10 V4Z" fill="#2424d8"/><ellipse cx="6.500" cy="7" rx="1.700" ry="4.500" fill="#d81848"/></g><g transform="translate(914,661)"><circle cx="6" cy="4" r="3" fill="#409098"/><path d="M1 11 Q2 6.500 6 7 Q10 6.500 10.500 10 L8 12 H1Z" fill="#58a8a0"/><circle cx="4.500" cy="3" r="1.200" fill="#a0d8d0"/><circle cx="10" cy="10.500" r="3.200" fill="#e06030"/><path d="M8.500 9 L11.500 12 M11.500 9 L8.500 12" stroke="#fff" stroke-width="1.100"/></g><g transform="translate(929,661)"><path d="M1 11 Q1.500 6 5 5 L4.500 7.500 Q7 3 10 1.500 L9.500 5 Q11.500 3.500 13 4 Q10.500 7 11 10.500 Q9 9 8.500 11.500 Q6.500 9 5 12 Q3.500 10 1 11Z" fill="#e02420"/><path d="M4 9.500 Q6 6.500 9 6" stroke="#f88070" stroke-width=".9" fill="none"/></g><g transform="translate(944,661)"><path d="M1.500 9 L7.500 1.500 L13 5.500 L8 12.500 L2.500 12.500Z" fill="#e0d848" stroke="#686000" stroke-width="1.100"/><path d="M4 9 L9 9.500 L10.500 7" fill="none" stroke="#686000" stroke-width="1"/></g><g transform="translate(960,661)"><rect x="5" y="1" width="7" height="5.500" fill="#4060b8"/><rect x="1" y="4.500" width="7" height="5.500" fill="#2848a0"/><rect x="2" y="10.500" width="5" height="1.200" fill="#8088a8"/><path d="M7.500 7.500 L13 13 M13 7.500 L7.500 13" stroke="#e03028" stroke-width="1.800"/></g><g transform="translate(975,661)"><path d="M1.500 2 V9 M4 1 V9 M6.500 2 V8 M9 1 V7 M11.500 2 V7" stroke="#8898b0" stroke-width="1.300"/><path d="M5 6.500 H12 V10 Q11.500 12.500 8.500 13.500 Q5.500 12.500 5 10Z" fill="#e8a020"/><rect x="7.900" y="7.500" width="1.300" height="3" fill="#402000"/><rect x="7.900" y="11.200" width="1.300" height="1.200" fill="#402000"/></g><g transform="translate(990,661)"><circle cx="6.500" cy="6.500" r="5.300" fill="#b8bcc8" stroke="#606874" stroke-width="1.600"/><circle cx="7.500" cy="5.500" r="2.300" fill="#e8e8f0" stroke="#707884" stroke-width="1"/><path d="M2 9 L6 7.500" stroke="#505864" stroke-width="1.500"/></g><g transform="translate(1005,661)"><path d="M3 1 L5 3 H8 L10 1 V6 H12 L6.500 11 L1.500 6 H3Z" fill="#38a838"/><path d="M2 10 L8 8.500 L12 10 L10 13 H3Z" fill="#9098a0" stroke="#606870" stroke-width=".7"/></g><g transform="translate(1020,660)"><rect x=".8" y=".8" width="13" height="13.500" fill="#fff" stroke="#101010" stroke-width="1.500"/><path d="M5.500 1 V14 M5.500 6.500 H14" stroke="#101010" stroke-width="1.400"/><path d="M2 1.500 L7.500 4.500 L2 7.500Z" fill="#30b040"/></g></svg>
<div class="abs tb" style="left:1043px;top:659px">1:29 PM</div>
</div></body></html>
